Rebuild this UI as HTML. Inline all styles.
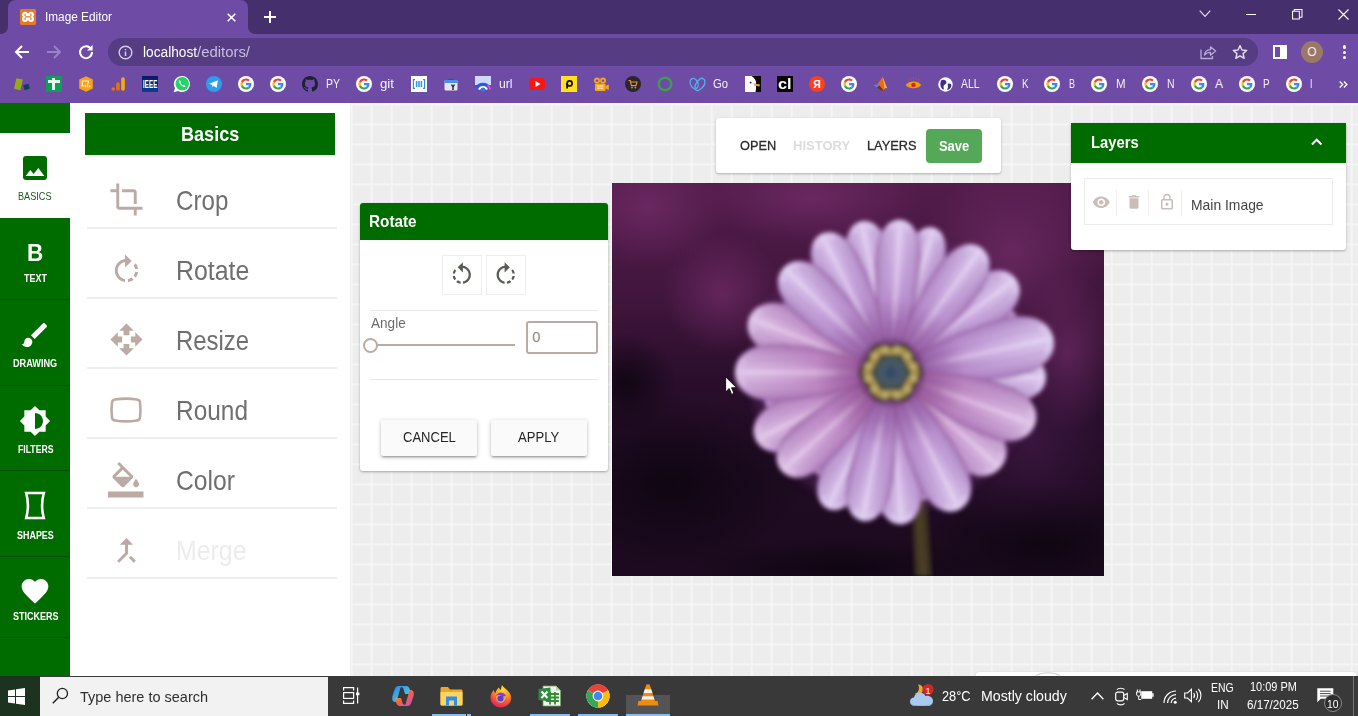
<!DOCTYPE html>
<html><head><meta charset="utf-8"><title>Image Editor</title><style>
*{box-sizing:border-box;margin:0;padding:0}
html,body{width:1358px;height:716px;overflow:hidden;background:#fff;font-family:"Liberation Sans",sans-serif;}
body{position:relative}
.abs{position:absolute}
.t{position:absolute;white-space:nowrap;line-height:1;transform-origin:0 50%}
svg{position:absolute;overflow:visible}
#canvas{left:350px;top:102px;width:1008px;height:574px;background-color:#ededed;
 background-image:linear-gradient(90deg,#f5f5f5 1.6px,transparent 1.6px),linear-gradient(180deg,#f5f5f5 1.6px,transparent 1.6px);
 background-size:20px 20px;background-position:0.6px 1.4px}
#side{left:0;top:102px;width:70px;height:574px;background:#006c00}
.sep{position:absolute;left:87px;width:250px;height:2px;background:#eeeeee}
#tabstrip{left:0;top:0;width:1358px;height:34px;background:#452f6c}
#toolbar{left:0;top:34px;width:1358px;height:68.6px;background:#6e4ca6}
#omni{left:108px;top:38px;width:1150px;height:28px;border-radius:14px;background:#553c83}
#taskbar{left:0;top:676px;width:1358px;height:40px;background:#393939}
</style></head>
<body>
<div id="canvas" class="abs"></div>
<div class="abs" style="left:975.6px;top:671.5px;width:380px;height:6px;background:#fff;border-radius:3px 3px 0 0;box-shadow:0 0 2px rgba(0,0,0,.12)"></div>
<svg style="left:1033px;top:672px" width="30" height="5" viewBox="0 0 30 5"><path d="M1 5 C7 -0.600 23 -0.600 29 5" stroke="#cfcfcf" stroke-width="1" fill="none"/></svg>
<div id="side" class="abs"></div>
<div class="abs" style="left:0;top:133px;width:70px;height:85px;background:#fff"></div>
<div class="abs" style="left:0;top:298.5px;width:70px;height:1.500px;background:#004e00"></div>
<div class="abs" style="left:0;top:384.5px;width:70px;height:1.500px;background:#004e00"></div>
<div class="abs" style="left:0;top:469.5px;width:70px;height:1.500px;background:#004e00"></div>
<div class="abs" style="left:0;top:555.5px;width:70px;height:1.500px;background:#004e00"></div>
<div class="abs" style="left:0;top:636.5px;width:70px;height:1.500px;background:#004e00"></div>
<svg style="left:19.2px;top:151.9px" width="32" height="32" viewBox="0 0 24 24" fill="#006c00" ><path d="M21 19V5c0-1.100-.9-2-2-2H5c-1.100 0-2 .9-2 2v14c0 1.100.9 2 2 2h14c1.100 0 2-.9 2-2zM8.500 13.500l2.500 3.010L14.500 12l4.500 6H5l3.500-4.500z"/></svg>
<span class="t" style="left:18.40px;top:192.00px;font-family:'Liberation Sans',sans-serif;font-size:10.4px;font-weight:normal;color:#1c5a1c;transform:scaleX(0.8813);">BASICS</span>
<span class="t" style="left:27.00px;top:242.00px;font-family:'Liberation Sans',sans-serif;font-size:23px;font-weight:bold;color:#fff;transform:scaleX(0.9805);">B</span>
<span class="t" style="left:23.70px;top:274.00px;font-family:'Liberation Sans',sans-serif;font-size:10.4px;font-weight:bold;color:#fff;transform:scaleX(0.8621);">TEXT</span>
<svg style="left:19px;top:319px" width="32" height="32" viewBox="0 0 24 24" fill="#fff" ><path d="M7 14c-1.660 0-3 1.340-3 3 0 1.310-1.160 2-2 2 .92 1.220 2.490 2 4 2 2.210 0 4-1.790 4-4 0-1.660-1.340-3-3-3zm13.710-9.370l-1.340-1.340c-.39-.39-1.020-.39-1.410 0L9 12.250 11.750 15l8.960-8.960c.39-.39.390-1.020 0-1.410z"/></svg>
<span class="t" style="left:13.10px;top:359.00px;font-family:'Liberation Sans',sans-serif;font-size:10.4px;font-weight:bold;color:#fff;transform:scaleX(0.8801);">DRAWING</span>
<svg style="left:19.2px;top:404.5px" width="32" height="32" viewBox="0 0 24 24" fill="#fff" ><path d="M20 15.310L23.310 12 20 8.690V4h-4.690L12 .69 8.690 4H4v4.690L.69 12 4 15.310V20h4.690L12 23.310 15.310 20H20v-4.690zM12 18V6c3.310 0 6 2.690 6 6s-2.690 6-6 6z"/></svg>
<span class="t" style="left:17.60px;top:445.00px;font-family:'Liberation Sans',sans-serif;font-size:10.4px;font-weight:bold;color:#fff;transform:scaleX(0.8347);">FILTERS</span>
<svg style="left:24px;top:491px" width="22" height="29" viewBox="0 0 22 29"><path d="M2.200 2 H19.800 C17.600 10 17.600 19 19.800 27 H2.200 C4.400 19 4.400 10 2.200 2 Z" stroke="#fff" stroke-width="2.6" fill="none" stroke-linejoin="miter"/></svg>
<span class="t" style="left:16.80px;top:531.00px;font-family:'Liberation Sans',sans-serif;font-size:10.4px;font-weight:bold;color:#fff;transform:scaleX(0.8611);">SHAPES</span>
<svg style="left:19.1px;top:575.2px" width="32" height="32" viewBox="0 0 24 24" fill="#fff" ><path d="M12 21.350l-1.450-1.320C5.400 15.360 2 12.280 2 8.500 2 5.420 4.420 3 7.500 3c1.740 0 3.410.81 4.500 2.090C13.090 3.810 14.760 3 16.500 3 19.580 3 22 5.420 22 8.500c0 3.780-3.400 6.860-8.550 11.540L12 21.350z"/></svg>
<span class="t" style="left:12.60px;top:612.00px;font-family:'Liberation Sans',sans-serif;font-size:10.4px;font-weight:bold;color:#fff;transform:scaleX(0.8659);">STICKERS</span>
<div class="abs" style="left:85px;top:113px;width:250px;height:41.500px;background:#006c00"></div>
<span class="t" style="left:181.10px;top:125.00px;font-family:'Liberation Sans',sans-serif;font-size:19.3px;font-weight:bold;color:#fff;transform:scaleX(0.9375);">Basics</span>
<div class="sep" style="top:227.2px"></div>
<div class="sep" style="top:297.2px"></div>
<div class="sep" style="top:367.2px"></div>
<div class="sep" style="top:437.2px"></div>
<div class="sep" style="top:507.2px"></div>
<div class="sep" style="top:577.2px"></div>
<svg style="left:108.5px;top:182px" width="35" height="35" viewBox="0 0 24 24" fill="#bcaaa4" ><path d="M17 15h2V7c0-1.1-.9-2-2-2H9v2h8v8zM7 17V1H5v4H1v2h4v10c0 1.1.9 2 2 2h10v4h2v-4h4v-2H7z"/></svg>
<span class="t" style="left:176.00px;top:187.00px;font-family:'Liberation Sans',sans-serif;font-size:27.3px;font-weight:normal;color:#6f6f6f;transform:scaleX(0.8839);">Crop</span>
<svg style="left:108.5px;top:253.3px" width="35" height="35" viewBox="0 0 24 24" fill="#bcaaa4" ><path d="M15.55 5.55L11 1v3.07C7.06 4.56 4 7.92 4 12s3.05 7.44 7 7.93v-2.02c-2.84-.48-5-2.94-5-5.91s2.16-5.43 5-5.910V10l4.550-4.450zM19.930 11c-.17-1.390-.72-2.730-1.620-3.890l-1.420 1.420c.54.750.88 1.600 1.020 2.470h2.020zM13 17.900v2.020c1.390-.17 2.740-.710 3.900-1.610l-1.440-1.440c-.75.540-1.590.890-2.460 1.030zm3.890-2.420l1.420 1.410c.9-1.160 1.450-2.500 1.620-3.890h-2.020c-.14.870-.48 1.720-1.020 2.480z"/></svg>
<span class="t" style="left:176.00px;top:257.00px;font-family:'Liberation Sans',sans-serif;font-size:27.3px;font-weight:normal;color:#6f6f6f;transform:scaleX(0.9113);">Rotate</span>
<svg style="left:108.5px;top:322px" width="35" height="35" viewBox="0 0 24 24" fill="#bcaaa4" ><path d="M10 9h4V6h3l-5-5-5 5h3v3zm-1 1H6V7l-5 5 5 5v-3h3v-4zm14 2l-5-5v3h-3v4h3v3l5-5zm-9 3h-4v3H7l5 5 5-5h-3v-3z"/></svg>
<span class="t" style="left:176.00px;top:327.00px;font-family:'Liberation Sans',sans-serif;font-size:27.3px;font-weight:normal;color:#6f6f6f;transform:scaleX(0.8749);">Resize</span>
<svg style="left:110px;top:397px" width="32" height="26" viewBox="0 0 32 26"><path d="M5 2.500 C11 1.500 21 1.500 27 2.500 C29 2.800 29.800 3.600 30 5.500 C30.600 10 30.600 16 30 20.500 C29.800 22.400 29 23.200 27 23.500 C21 24.500 11 24.500 5 23.500 C3 23.200 2.200 22.400 2 20.500 C1.400 16 1.400 10 2 5.500 C2.200 3.600 3 2.800 5 2.500 Z" stroke="#bcaaa4" stroke-width="2.600" fill="none"/></svg>
<span class="t" style="left:176.00px;top:397.00px;font-family:'Liberation Sans',sans-serif;font-size:27.3px;font-weight:normal;color:#6f6f6f;transform:scaleX(0.8949);">Round</span>
<svg style="left:107.7px;top:462px" width="35.5" height="35.5" viewBox="0 0 24 24" fill="#bcaaa4" ><path d="M16.56 8.94L7.62 0 6.21 1.41l2.38 2.380-5.150 5.150c-.59.590-.59 1.540 0 2.120l5.500 5.500c.29.290.68.440 1.060.440s.77-.15 1.060-.44l5.500-5.500c.59-.58.59-1.530 0-2.120zM5.210 10L10 5.210 14.790 10H5.210zM19 11.500s-2 2.170-2 3.500c0 1.100.9 2 2 2s2-.9 2-2c0-1.330-2-3.500-2-3.500z"/><path d="M0 20h24v4H0z"/></svg>
<span class="t" style="left:176.00px;top:467.00px;font-family:'Liberation Sans',sans-serif;font-size:27.3px;font-weight:normal;color:#6f6f6f;transform:scaleX(0.9044);">Color</span>
<svg style="left:108.5px;top:532.5px" width="35" height="35" viewBox="0 0 24 24" fill="#bcaaa4" ><path d="M17 20.410L18.410 19 15 15.590 13.590 17 17 20.410zM7.500 8H11v5.590L5.590 19 7 20.410l6-6V8h3.500L12 3.500 7.500 8z"/></svg>
<span class="t" style="left:176.00px;top:537.00px;font-family:'Liberation Sans',sans-serif;font-size:27.3px;font-weight:normal;color:#ececec;transform:scaleX(0.9111);">Merge</span>
<svg style="left:612px;top:183px" width="492" height="393" viewBox="0 0 492 393">
<defs>
<linearGradient id="bgv" x1="0" y1="0" x2="0" y2="1"><stop offset="0" stop-color="#531c4b"/><stop offset="0.3" stop-color="#40153c"/><stop offset="0.5" stop-color="#2a0e2c"/><stop offset="0.75" stop-color="#1f0b22"/><stop offset="1" stop-color="#1d0a20"/></linearGradient>
<radialGradient id="blob1" cx="0.5" cy="0.5" r="0.5"><stop offset="0" stop-color="#7a3070" stop-opacity="0.6"/><stop offset="1" stop-color="#7a3070" stop-opacity="0"/></radialGradient>
<radialGradient id="blob3" cx="0.5" cy="0.5" r="0.5"><stop offset="0" stop-color="#4a1c50" stop-opacity="0.55"/><stop offset="1" stop-color="#4a1c50" stop-opacity="0"/></radialGradient>
<radialGradient id="blob2" cx="0.5" cy="0.5" r="0.5"><stop offset="0" stop-color="#0c040f" stop-opacity="0.8"/><stop offset="1" stop-color="#0c040f" stop-opacity="0"/></radialGradient>
<linearGradient id="pg" x1="0" y1="1" x2="0" y2="0"><stop offset="0" stop-color="#8a4e98"/><stop offset="0.22" stop-color="#b384c8"/><stop offset="0.6" stop-color="#cfafe4"/><stop offset="1" stop-color="#dfcdf2"/></linearGradient>
<linearGradient id="pg2" x1="0" y1="1" x2="0" y2="0"><stop offset="0" stop-color="#6c3578"/><stop offset="0.4" stop-color="#a066ae"/><stop offset="1" stop-color="#bf93cf"/></linearGradient>
<linearGradient id="pgp" x1="0" y1="1" x2="0" y2="0"><stop offset="0" stop-color="#8f4a8e"/><stop offset="0.22" stop-color="#b97ab8"/><stop offset="0.6" stop-color="#d0a2d6"/><stop offset="1" stop-color="#dfc3e8"/></linearGradient>
<linearGradient id="xg" x1="0" y1="0" x2="1" y2="0"><stop offset="0" stop-color="#7a3f8c" stop-opacity="0.5"/><stop offset="0.28" stop-color="#7a3f8c" stop-opacity="0.05"/><stop offset="0.5" stop-color="#ffffff" stop-opacity="0.16"/><stop offset="0.72" stop-color="#7a3f8c" stop-opacity="0.05"/><stop offset="1" stop-color="#7a3f8c" stop-opacity="0.5"/></linearGradient>
<radialGradient id="core" cx="0.5" cy="0.5" r="0.5"><stop offset="0" stop-color="#6a2f70" stop-opacity="0.75"/><stop offset="0.45" stop-color="#7a3a80" stop-opacity="0.45"/><stop offset="1" stop-color="#7a3a80" stop-opacity="0"/></radialGradient>
<radialGradient id="ctr" cx="0.5" cy="0.5" r="0.5"><stop offset="0" stop-color="#2f4560"/><stop offset="0.6" stop-color="#46596c"/><stop offset="1" stop-color="#48544f"/></radialGradient>
<filter id="bl" x="-5%" y="-5%" width="110%" height="110%"><feGaussianBlur stdDeviation="1.9"/></filter>
<filter id="bl3" x="-20%" y="-20%" width="140%" height="140%"><feGaussianBlur stdDeviation="4"/></filter>
<clipPath id="imgclip"><rect x="0" y="0" width="492" height="393"/></clipPath>
</defs>
<g clip-path="url(#imgclip)">
<rect width="492" height="393" fill="url(#bgv)"/>
<ellipse cx="35" cy="25" rx="80" ry="60" fill="url(#blob1)"/>
<ellipse cx="200" cy="15" rx="110" ry="45" fill="url(#blob1)"/>
<ellipse cx="400" cy="70" rx="90" ry="90" fill="url(#blob1)"/>
<ellipse cx="110" cy="110" rx="60" ry="60" fill="url(#blob1)"/>
<ellipse cx="455" cy="170" rx="50" ry="80" fill="url(#blob1)"/>
<ellipse cx="420" cy="260" rx="90" ry="110" fill="url(#blob3)"/>
<ellipse cx="60" cy="300" rx="130" ry="90" fill="url(#blob2)"/>
<ellipse cx="430" cy="360" rx="120" ry="60" fill="url(#blob2)"/>
<ellipse cx="15" cy="200" rx="50" ry="50" fill="url(#blob2)"/>
<ellipse cx="230" cy="385" rx="150" ry="30" fill="url(#blob2)"/>
<path d="M299 300 C301 340 302 370 303 393 L320 393 C318 370 316 340 314 300 Z" fill="#3f3620" filter="url(#bl)"/>
<path d="M305 320 C306 350 308 375 310 393 L314 393 C312 375 310 350 309 320 Z" fill="#5a4c28" opacity="0.6" filter="url(#bl)"/>
<circle cx="279" cy="189.5" r="140" fill="#5a2862" opacity="0.5" filter="url(#bl3)"/>
<g filter="url(#bl)">
<path d="M -2.5 -6 C -11.200000000000001 -32.0, -20.0 -64.0, -20.0 -94.72 C -20.0 -119.04, -10.0 -128, 0 -128 C 10.0 -128, 20.0 -119.04, 20.0 -94.72 C 20.0 -64.0, 11.200000000000001 -32.0, 2.5 -6 Z" fill="url(#pg2)" stroke="#6a3a7a" stroke-width="1" transform="translate(279 189.5) rotate(-19)"/>
<path d="M -2.5 -6 C -10.64 -32.0, -19.0 -64.0, -19.0 -94.72 C -19.0 -119.04, -9.5 -128, 0 -128 C 9.5 -128, 19.0 -119.04, 19.0 -94.72 C 19.0 -64.0, 10.64 -32.0, 2.5 -6 Z" fill="url(#pg2)" stroke="#6a3a7a" stroke-width="1" transform="translate(279 189.5) rotate(26)"/>
<path d="M -2.5 -6 C -11.200000000000001 -33.0, -20.0 -66.0, -20.0 -97.67999999999999 C -20.0 -122.76, -10.0 -132, 0 -132 C 10.0 -132, 20.0 -122.76, 20.0 -97.67999999999999 C 20.0 -66.0, 11.200000000000001 -33.0, 2.5 -6 Z" fill="url(#pg2)" stroke="#6a3a7a" stroke-width="1" transform="translate(279 189.5) rotate(45)"/>
<path d="M -2.5 -6 C -11.760000000000002 -34.5, -21.0 -69.0, -21.0 -102.12 C -21.0 -128.34, -10.5 -138, 0 -138 C 10.5 -138, 21.0 -128.34, 21.0 -102.12 C 21.0 -69.0, 11.760000000000002 -34.5, 2.5 -6 Z" fill="url(#pg2)" stroke="#6a3a7a" stroke-width="1" transform="translate(279 189.5) rotate(66)"/>
<path d="M -2.5 -6 C -11.760000000000002 -32.5, -21.0 -65.0, -21.0 -96.2 C -21.0 -120.9, -10.5 -130, 0 -130 C 10.5 -130, 21.0 -120.9, 21.0 -96.2 C 21.0 -65.0, 11.760000000000002 -32.5, 2.5 -6 Z" fill="url(#pg2)" stroke="#6a3a7a" stroke-width="1" transform="translate(279 189.5) rotate(100)"/>
<path d="M -2.5 -6 C -11.760000000000002 -31.5, -21.0 -63.0, -21.0 -93.24 C -21.0 -117.18, -10.5 -126, 0 -126 C 10.5 -126, 21.0 -117.18, 21.0 -93.24 C 21.0 -63.0, 11.760000000000002 -31.5, 2.5 -6 Z" fill="url(#pg2)" stroke="#6a3a7a" stroke-width="1" transform="translate(279 189.5) rotate(121)"/>
<path d="M -2.5 -6 C -11.200000000000001 -32.0, -20.0 -64.0, -20.0 -94.72 C -20.0 -119.04, -10.0 -128, 0 -128 C 10.0 -128, 20.0 -119.04, 20.0 -94.72 C 20.0 -64.0, 11.200000000000001 -32.0, 2.5 -6 Z" fill="url(#pg2)" stroke="#6a3a7a" stroke-width="1" transform="translate(279 189.5) rotate(142)"/>
<path d="M -2.5 -6 C -10.64 -33.0, -19.0 -66.0, -19.0 -97.67999999999999 C -19.0 -122.76, -9.5 -132, 0 -132 C 9.5 -132, 19.0 -122.76, 19.0 -97.67999999999999 C 19.0 -66.0, 10.64 -33.0, 2.5 -6 Z" fill="url(#pg2)" stroke="#6a3a7a" stroke-width="1" transform="translate(279 189.5) rotate(165)"/>
<path d="M -2.5 -6 C -11.200000000000001 -31.5, -20.0 -63.0, -20.0 -93.24 C -20.0 -117.18, -10.0 -126, 0 -126 C 10.0 -126, 20.0 -117.18, 20.0 -93.24 C 20.0 -63.0, 11.200000000000001 -31.5, 2.5 -6 Z" fill="url(#pg2)" stroke="#6a3a7a" stroke-width="1" transform="translate(279 189.5) rotate(217)"/>
<path d="M -2.5 -6 C -11.760000000000002 -32.5, -21.0 -65.0, -21.0 -96.2 C -21.0 -120.9, -10.5 -130, 0 -130 C 10.5 -130, 21.0 -120.9, 21.0 -96.2 C 21.0 -65.0, 11.760000000000002 -32.5, 2.5 -6 Z" fill="url(#pg2)" stroke="#6a3a7a" stroke-width="1" transform="translate(279 189.5) rotate(257)"/>
<path d="M -2.5 -6 C -11.760000000000002 -32.5, -21.0 -65.0, -21.0 -96.2 C -21.0 -120.9, -10.5 -130, 0 -130 C 10.5 -130, 21.0 -120.9, 21.0 -96.2 C 21.0 -65.0, 11.760000000000002 -32.5, 2.5 -6 Z" fill="url(#pg2)" stroke="#6a3a7a" stroke-width="1" transform="translate(279 189.5) rotate(281)"/>
<path d="M -2.5 -6 C -11.760000000000002 -32.0, -21.0 -64.0, -21.0 -94.72 C -21.0 -119.04, -10.5 -128, 0 -128 C 10.5 -128, 21.0 -119.04, 21.0 -94.72 C 21.0 -64.0, 11.760000000000002 -32.0, 2.5 -6 Z" fill="url(#pg2)" stroke="#6a3a7a" stroke-width="1" transform="translate(279 189.5) rotate(303)"/>
<path d="M -2.5 -6 C -12.32 -38.5, -22.0 -77.0, -22.0 -113.96 C -22.0 -143.22, -11.0 -154, 0 -154 C 11.0 -154, 22.0 -143.22, 22.0 -113.96 C 22.0 -77.0, 12.32 -38.5, 2.5 -6 Z" fill="url(#pg)" stroke="#9a62a4" stroke-width="1.2" transform="translate(279 189.5) rotate(-11)"/>
<path d="M -2.5 -6 C -12.32 -38.5, -22.0 -77.0, -22.0 -113.96 C -22.0 -143.22, -11.0 -154, 0 -154 C 11.0 -154, 22.0 -143.22, 22.0 -113.96 C 22.0 -77.0, 12.32 -38.5, 2.5 -6 Z" fill="url(#xg)" transform="translate(279 189.5) rotate(-11)"/>
<path d="M -2.1119999999999997 -30.8 Q -11.616 -92.39999999999999 -8.447999999999999 -143.22" stroke="#9460a8" stroke-opacity="0.4" stroke-width="2" fill="none" transform="translate(279 189.5) rotate(-11)"/>
<path d="M 2.1119999999999997 -30.8 Q 11.616 -92.39999999999999 8.447999999999999 -143.22" stroke="#9460a8" stroke-opacity="0.4" stroke-width="2" fill="none" transform="translate(279 189.5) rotate(-11)"/>
<path d="M -3.96 -33.88 Q -16.632 -92.39999999999999 -11.879999999999999 -146.29999999999998" stroke="#7d4a96" stroke-opacity="0.28" stroke-width="1" fill="none" transform="translate(279 189.5) rotate(-11)"/>
<path d="M -1.3199999999999998 -33.88 Q -5.544 -92.39999999999999 -3.9599999999999995 -146.29999999999998" stroke="#7d4a96" stroke-opacity="0.28" stroke-width="1" fill="none" transform="translate(279 189.5) rotate(-11)"/>
<path d="M 1.3199999999999998 -33.88 Q 5.544 -92.39999999999999 3.9599999999999995 -146.29999999999998" stroke="#7d4a96" stroke-opacity="0.28" stroke-width="1" fill="none" transform="translate(279 189.5) rotate(-11)"/>
<path d="M 3.96 -33.88 Q 16.632 -92.39999999999999 11.879999999999999 -146.29999999999998" stroke="#7d4a96" stroke-opacity="0.28" stroke-width="1" fill="none" transform="translate(279 189.5) rotate(-11)"/>
<path d="M 0 -53.9 L 0 -141.68" stroke="#f0e0f8" stroke-opacity="0.35" stroke-width="3" fill="none" transform="translate(279 189.5) rotate(-11)"/>
<path d="M -2.5 -6 C -11.200000000000001 -37.75, -20.0 -75.5, -20.0 -111.74 C -20.0 -140.43, -10.0 -151, 0 -151 C 10.0 -151, 20.0 -140.43, 20.0 -111.74 C 20.0 -75.5, 11.200000000000001 -37.75, 2.5 -6 Z" fill="url(#pg)" stroke="#9a62a4" stroke-width="1.2" transform="translate(279 189.5) rotate(16.5)"/>
<path d="M -2.5 -6 C -11.200000000000001 -37.75, -20.0 -75.5, -20.0 -111.74 C -20.0 -140.43, -10.0 -151, 0 -151 C 10.0 -151, 20.0 -140.43, 20.0 -111.74 C 20.0 -75.5, 11.200000000000001 -37.75, 2.5 -6 Z" fill="url(#xg)" transform="translate(279 189.5) rotate(16.5)"/>
<path d="M -1.92 -30.200000000000003 Q -10.56 -90.6 -7.68 -140.43" stroke="#9460a8" stroke-opacity="0.4" stroke-width="2" fill="none" transform="translate(279 189.5) rotate(16.5)"/>
<path d="M 1.92 -30.200000000000003 Q 10.56 -90.6 7.68 -140.43" stroke="#9460a8" stroke-opacity="0.4" stroke-width="2" fill="none" transform="translate(279 189.5) rotate(16.5)"/>
<path d="M -3.5999999999999996 -33.22 Q -15.12 -90.6 -10.799999999999999 -143.45" stroke="#7d4a96" stroke-opacity="0.28" stroke-width="1" fill="none" transform="translate(279 189.5) rotate(16.5)"/>
<path d="M -1.2 -33.22 Q -5.04 -90.6 -3.5999999999999996 -143.45" stroke="#7d4a96" stroke-opacity="0.28" stroke-width="1" fill="none" transform="translate(279 189.5) rotate(16.5)"/>
<path d="M 1.2 -33.22 Q 5.04 -90.6 3.5999999999999996 -143.45" stroke="#7d4a96" stroke-opacity="0.28" stroke-width="1" fill="none" transform="translate(279 189.5) rotate(16.5)"/>
<path d="M 3.5999999999999996 -33.22 Q 15.12 -90.6 10.799999999999999 -143.45" stroke="#7d4a96" stroke-opacity="0.28" stroke-width="1" fill="none" transform="translate(279 189.5) rotate(16.5)"/>
<path d="M 0 -52.849999999999994 L 0 -138.92000000000002" stroke="#f0e0f8" stroke-opacity="0.35" stroke-width="3" fill="none" transform="translate(279 189.5) rotate(16.5)"/>
<path d="M -2.5 -6 C -14.000000000000002 -39.0, -25.0 -78.0, -25.0 -115.44 C -25.0 -145.08, -12.5 -156, 0 -156 C 12.5 -156, 25.0 -145.08, 25.0 -115.44 C 25.0 -78.0, 14.000000000000002 -39.0, 2.5 -6 Z" fill="url(#pg)" stroke="#9a62a4" stroke-width="1.2" transform="translate(279 189.5) rotate(53)"/>
<path d="M -2.5 -6 C -14.000000000000002 -39.0, -25.0 -78.0, -25.0 -115.44 C -25.0 -145.08, -12.5 -156, 0 -156 C 12.5 -156, 25.0 -145.08, 25.0 -115.44 C 25.0 -78.0, 14.000000000000002 -39.0, 2.5 -6 Z" fill="url(#xg)" transform="translate(279 189.5) rotate(53)"/>
<path d="M -2.4000000000000004 -31.200000000000003 Q -13.200000000000001 -93.6 -9.600000000000001 -145.08" stroke="#9460a8" stroke-opacity="0.4" stroke-width="2" fill="none" transform="translate(279 189.5) rotate(53)"/>
<path d="M 2.4000000000000004 -31.200000000000003 Q 13.200000000000001 -93.6 9.600000000000001 -145.08" stroke="#9460a8" stroke-opacity="0.4" stroke-width="2" fill="none" transform="translate(279 189.5) rotate(53)"/>
<path d="M -4.5 -34.32 Q -18.900000000000002 -93.6 -13.5 -148.2" stroke="#7d4a96" stroke-opacity="0.28" stroke-width="1" fill="none" transform="translate(279 189.5) rotate(53)"/>
<path d="M -1.5 -34.32 Q -6.300000000000001 -93.6 -4.5 -148.2" stroke="#7d4a96" stroke-opacity="0.28" stroke-width="1" fill="none" transform="translate(279 189.5) rotate(53)"/>
<path d="M 1.5 -34.32 Q 6.300000000000001 -93.6 4.5 -148.2" stroke="#7d4a96" stroke-opacity="0.28" stroke-width="1" fill="none" transform="translate(279 189.5) rotate(53)"/>
<path d="M 4.5 -34.32 Q 18.900000000000002 -93.6 13.5 -148.2" stroke="#7d4a96" stroke-opacity="0.28" stroke-width="1" fill="none" transform="translate(279 189.5) rotate(53)"/>
<path d="M 0 -54.599999999999994 L 0 -143.52" stroke="#f0e0f8" stroke-opacity="0.35" stroke-width="3" fill="none" transform="translate(279 189.5) rotate(53)"/>
<path d="M -2.5 -6 C -14.000000000000002 -38.75, -25.0 -77.5, -25.0 -114.7 C -25.0 -144.15, -12.5 -155, 0 -155 C 12.5 -155, 25.0 -144.15, 25.0 -114.7 C 25.0 -77.5, 14.000000000000002 -38.75, 2.5 -6 Z" fill="url(#pg)" stroke="#9a62a4" stroke-width="1.2" transform="translate(279 189.5) rotate(92)"/>
<path d="M -2.5 -6 C -14.000000000000002 -38.75, -25.0 -77.5, -25.0 -114.7 C -25.0 -144.15, -12.5 -155, 0 -155 C 12.5 -155, 25.0 -144.15, 25.0 -114.7 C 25.0 -77.5, 14.000000000000002 -38.75, 2.5 -6 Z" fill="url(#xg)" transform="translate(279 189.5) rotate(92)"/>
<path d="M -2.4000000000000004 -31.0 Q -13.200000000000001 -93.0 -9.600000000000001 -144.15" stroke="#9460a8" stroke-opacity="0.4" stroke-width="2" fill="none" transform="translate(279 189.5) rotate(92)"/>
<path d="M 2.4000000000000004 -31.0 Q 13.200000000000001 -93.0 9.600000000000001 -144.15" stroke="#9460a8" stroke-opacity="0.4" stroke-width="2" fill="none" transform="translate(279 189.5) rotate(92)"/>
<path d="M -4.5 -34.1 Q -18.900000000000002 -93.0 -13.5 -147.25" stroke="#7d4a96" stroke-opacity="0.28" stroke-width="1" fill="none" transform="translate(279 189.5) rotate(92)"/>
<path d="M -1.5 -34.1 Q -6.300000000000001 -93.0 -4.5 -147.25" stroke="#7d4a96" stroke-opacity="0.28" stroke-width="1" fill="none" transform="translate(279 189.5) rotate(92)"/>
<path d="M 1.5 -34.1 Q 6.300000000000001 -93.0 4.5 -147.25" stroke="#7d4a96" stroke-opacity="0.28" stroke-width="1" fill="none" transform="translate(279 189.5) rotate(92)"/>
<path d="M 4.5 -34.1 Q 18.900000000000002 -93.0 13.5 -147.25" stroke="#7d4a96" stroke-opacity="0.28" stroke-width="1" fill="none" transform="translate(279 189.5) rotate(92)"/>
<path d="M 0 -54.25 L 0 -142.6" stroke="#f0e0f8" stroke-opacity="0.35" stroke-width="3" fill="none" transform="translate(279 189.5) rotate(92)"/>
<path d="M -2.5 -6 C -15.120000000000001 -36.25, -27.0 -72.5, -27.0 -107.3 C -27.0 -134.85, -13.5 -145, 0 -145 C 13.5 -145, 27.0 -134.85, 27.0 -107.3 C 27.0 -72.5, 15.120000000000001 -36.25, 2.5 -6 Z" fill="url(#pgp)" stroke="#9a62a4" stroke-width="1.2" transform="translate(279 189.5) rotate(131)"/>
<path d="M -2.5 -6 C -15.120000000000001 -36.25, -27.0 -72.5, -27.0 -107.3 C -27.0 -134.85, -13.5 -145, 0 -145 C 13.5 -145, 27.0 -134.85, 27.0 -107.3 C 27.0 -72.5, 15.120000000000001 -36.25, 2.5 -6 Z" fill="url(#xg)" transform="translate(279 189.5) rotate(131)"/>
<path d="M -2.592 -29.0 Q -14.256 -87.0 -10.368 -134.85" stroke="#9460a8" stroke-opacity="0.4" stroke-width="2" fill="none" transform="translate(279 189.5) rotate(131)"/>
<path d="M 2.592 -29.0 Q 14.256 -87.0 10.368 -134.85" stroke="#9460a8" stroke-opacity="0.4" stroke-width="2" fill="none" transform="translate(279 189.5) rotate(131)"/>
<path d="M -4.859999999999999 -31.9 Q -20.412 -87.0 -14.579999999999998 -137.75" stroke="#7d4a96" stroke-opacity="0.28" stroke-width="1" fill="none" transform="translate(279 189.5) rotate(131)"/>
<path d="M -1.6199999999999999 -31.9 Q -6.803999999999999 -87.0 -4.859999999999999 -137.75" stroke="#7d4a96" stroke-opacity="0.28" stroke-width="1" fill="none" transform="translate(279 189.5) rotate(131)"/>
<path d="M 1.6199999999999999 -31.9 Q 6.803999999999999 -87.0 4.859999999999999 -137.75" stroke="#7d4a96" stroke-opacity="0.28" stroke-width="1" fill="none" transform="translate(279 189.5) rotate(131)"/>
<path d="M 4.859999999999999 -31.9 Q 20.412 -87.0 14.579999999999998 -137.75" stroke="#7d4a96" stroke-opacity="0.28" stroke-width="1" fill="none" transform="translate(279 189.5) rotate(131)"/>
<path d="M 0 -50.75 L 0 -133.4" stroke="#f0e0f8" stroke-opacity="0.35" stroke-width="3" fill="none" transform="translate(279 189.5) rotate(131)"/>
<path d="M -2.5 -6 C -12.88 -38.0, -23.0 -76.0, -23.0 -112.48 C -23.0 -141.36, -11.5 -152, 0 -152 C 11.5 -152, 23.0 -141.36, 23.0 -112.48 C 23.0 -76.0, 12.88 -38.0, 2.5 -6 Z" fill="url(#pg)" stroke="#9a62a4" stroke-width="1.2" transform="translate(279 189.5) rotate(176)"/>
<path d="M -2.5 -6 C -12.88 -38.0, -23.0 -76.0, -23.0 -112.48 C -23.0 -141.36, -11.5 -152, 0 -152 C 11.5 -152, 23.0 -141.36, 23.0 -112.48 C 23.0 -76.0, 12.88 -38.0, 2.5 -6 Z" fill="url(#xg)" transform="translate(279 189.5) rotate(176)"/>
<path d="M -2.2079999999999997 -30.400000000000002 Q -12.144 -91.2 -8.831999999999999 -141.36" stroke="#9460a8" stroke-opacity="0.4" stroke-width="2" fill="none" transform="translate(279 189.5) rotate(176)"/>
<path d="M 2.2079999999999997 -30.400000000000002 Q 12.144 -91.2 8.831999999999999 -141.36" stroke="#9460a8" stroke-opacity="0.4" stroke-width="2" fill="none" transform="translate(279 189.5) rotate(176)"/>
<path d="M -4.14 -33.44 Q -17.387999999999998 -91.2 -12.419999999999998 -144.4" stroke="#7d4a96" stroke-opacity="0.28" stroke-width="1" fill="none" transform="translate(279 189.5) rotate(176)"/>
<path d="M -1.38 -33.44 Q -5.795999999999999 -91.2 -4.14 -144.4" stroke="#7d4a96" stroke-opacity="0.28" stroke-width="1" fill="none" transform="translate(279 189.5) rotate(176)"/>
<path d="M 1.38 -33.44 Q 5.795999999999999 -91.2 4.14 -144.4" stroke="#7d4a96" stroke-opacity="0.28" stroke-width="1" fill="none" transform="translate(279 189.5) rotate(176)"/>
<path d="M 4.14 -33.44 Q 17.387999999999998 -91.2 12.419999999999998 -144.4" stroke="#7d4a96" stroke-opacity="0.28" stroke-width="1" fill="none" transform="translate(279 189.5) rotate(176)"/>
<path d="M 0 -53.199999999999996 L 0 -139.84" stroke="#f0e0f8" stroke-opacity="0.35" stroke-width="3" fill="none" transform="translate(279 189.5) rotate(176)"/>
<path d="M -2.5 -6 C -12.32 -37.5, -22.0 -75.0, -22.0 -111.0 C -22.0 -139.5, -11.0 -150, 0 -150 C 11.0 -150, 22.0 -139.5, 22.0 -111.0 C 22.0 -75.0, 12.32 -37.5, 2.5 -6 Z" fill="url(#pg)" stroke="#9a62a4" stroke-width="1.2" transform="translate(279 189.5) rotate(205)"/>
<path d="M -2.5 -6 C -12.32 -37.5, -22.0 -75.0, -22.0 -111.0 C -22.0 -139.5, -11.0 -150, 0 -150 C 11.0 -150, 22.0 -139.5, 22.0 -111.0 C 22.0 -75.0, 12.32 -37.5, 2.5 -6 Z" fill="url(#xg)" transform="translate(279 189.5) rotate(205)"/>
<path d="M -2.1119999999999997 -30.0 Q -11.616 -90.0 -8.447999999999999 -139.5" stroke="#9460a8" stroke-opacity="0.4" stroke-width="2" fill="none" transform="translate(279 189.5) rotate(205)"/>
<path d="M 2.1119999999999997 -30.0 Q 11.616 -90.0 8.447999999999999 -139.5" stroke="#9460a8" stroke-opacity="0.4" stroke-width="2" fill="none" transform="translate(279 189.5) rotate(205)"/>
<path d="M -3.96 -33.0 Q -16.632 -90.0 -11.879999999999999 -142.5" stroke="#7d4a96" stroke-opacity="0.28" stroke-width="1" fill="none" transform="translate(279 189.5) rotate(205)"/>
<path d="M -1.3199999999999998 -33.0 Q -5.544 -90.0 -3.9599999999999995 -142.5" stroke="#7d4a96" stroke-opacity="0.28" stroke-width="1" fill="none" transform="translate(279 189.5) rotate(205)"/>
<path d="M 1.3199999999999998 -33.0 Q 5.544 -90.0 3.9599999999999995 -142.5" stroke="#7d4a96" stroke-opacity="0.28" stroke-width="1" fill="none" transform="translate(279 189.5) rotate(205)"/>
<path d="M 3.96 -33.0 Q 16.632 -90.0 11.879999999999999 -142.5" stroke="#7d4a96" stroke-opacity="0.28" stroke-width="1" fill="none" transform="translate(279 189.5) rotate(205)"/>
<path d="M 0 -52.5 L 0 -138.0" stroke="#f0e0f8" stroke-opacity="0.35" stroke-width="3" fill="none" transform="translate(279 189.5) rotate(205)"/>
<path d="M -2.5 -6 C -14.000000000000002 -37.75, -25.0 -75.5, -25.0 -111.74 C -25.0 -140.43, -12.5 -151, 0 -151 C 12.5 -151, 25.0 -140.43, 25.0 -111.74 C 25.0 -75.5, 14.000000000000002 -37.75, 2.5 -6 Z" fill="url(#pgp)" stroke="#9a62a4" stroke-width="1.2" transform="translate(279 189.5) rotate(243.5)"/>
<path d="M -2.5 -6 C -14.000000000000002 -37.75, -25.0 -75.5, -25.0 -111.74 C -25.0 -140.43, -12.5 -151, 0 -151 C 12.5 -151, 25.0 -140.43, 25.0 -111.74 C 25.0 -75.5, 14.000000000000002 -37.75, 2.5 -6 Z" fill="url(#xg)" transform="translate(279 189.5) rotate(243.5)"/>
<path d="M -2.4000000000000004 -30.200000000000003 Q -13.200000000000001 -90.6 -9.600000000000001 -140.43" stroke="#9460a8" stroke-opacity="0.4" stroke-width="2" fill="none" transform="translate(279 189.5) rotate(243.5)"/>
<path d="M 2.4000000000000004 -30.200000000000003 Q 13.200000000000001 -90.6 9.600000000000001 -140.43" stroke="#9460a8" stroke-opacity="0.4" stroke-width="2" fill="none" transform="translate(279 189.5) rotate(243.5)"/>
<path d="M -4.5 -33.22 Q -18.900000000000002 -90.6 -13.5 -143.45" stroke="#7d4a96" stroke-opacity="0.28" stroke-width="1" fill="none" transform="translate(279 189.5) rotate(243.5)"/>
<path d="M -1.5 -33.22 Q -6.300000000000001 -90.6 -4.5 -143.45" stroke="#7d4a96" stroke-opacity="0.28" stroke-width="1" fill="none" transform="translate(279 189.5) rotate(243.5)"/>
<path d="M 1.5 -33.22 Q 6.300000000000001 -90.6 4.5 -143.45" stroke="#7d4a96" stroke-opacity="0.28" stroke-width="1" fill="none" transform="translate(279 189.5) rotate(243.5)"/>
<path d="M 4.5 -33.22 Q 18.900000000000002 -90.6 13.5 -143.45" stroke="#7d4a96" stroke-opacity="0.28" stroke-width="1" fill="none" transform="translate(279 189.5) rotate(243.5)"/>
<path d="M 0 -52.849999999999994 L 0 -138.92000000000002" stroke="#f0e0f8" stroke-opacity="0.35" stroke-width="3" fill="none" transform="translate(279 189.5) rotate(243.5)"/>
<path d="M -2.5 -6 C -14.560000000000002 -38.0, -26.0 -76.0, -26.0 -112.48 C -26.0 -141.36, -13.0 -152, 0 -152 C 13.0 -152, 26.0 -141.36, 26.0 -112.48 C 26.0 -76.0, 14.560000000000002 -38.0, 2.5 -6 Z" fill="url(#pgp)" stroke="#9a62a4" stroke-width="1.2" transform="translate(279 189.5) rotate(291)"/>
<path d="M -2.5 -6 C -14.560000000000002 -38.0, -26.0 -76.0, -26.0 -112.48 C -26.0 -141.36, -13.0 -152, 0 -152 C 13.0 -152, 26.0 -141.36, 26.0 -112.48 C 26.0 -76.0, 14.560000000000002 -38.0, 2.5 -6 Z" fill="url(#xg)" transform="translate(279 189.5) rotate(291)"/>
<path d="M -2.4960000000000004 -30.400000000000002 Q -13.728000000000002 -91.2 -9.984000000000002 -141.36" stroke="#9460a8" stroke-opacity="0.4" stroke-width="2" fill="none" transform="translate(279 189.5) rotate(291)"/>
<path d="M 2.4960000000000004 -30.400000000000002 Q 13.728000000000002 -91.2 9.984000000000002 -141.36" stroke="#9460a8" stroke-opacity="0.4" stroke-width="2" fill="none" transform="translate(279 189.5) rotate(291)"/>
<path d="M -4.68 -33.44 Q -19.656 -91.2 -14.04 -144.4" stroke="#7d4a96" stroke-opacity="0.28" stroke-width="1" fill="none" transform="translate(279 189.5) rotate(291)"/>
<path d="M -1.56 -33.44 Q -6.5520000000000005 -91.2 -4.68 -144.4" stroke="#7d4a96" stroke-opacity="0.28" stroke-width="1" fill="none" transform="translate(279 189.5) rotate(291)"/>
<path d="M 1.56 -33.44 Q 6.5520000000000005 -91.2 4.68 -144.4" stroke="#7d4a96" stroke-opacity="0.28" stroke-width="1" fill="none" transform="translate(279 189.5) rotate(291)"/>
<path d="M 4.68 -33.44 Q 19.656 -91.2 14.04 -144.4" stroke="#7d4a96" stroke-opacity="0.28" stroke-width="1" fill="none" transform="translate(279 189.5) rotate(291)"/>
<path d="M 0 -53.199999999999996 L 0 -139.84" stroke="#f0e0f8" stroke-opacity="0.35" stroke-width="3" fill="none" transform="translate(279 189.5) rotate(291)"/>
<path d="M -2.5 -6 C -12.88 -38.75, -23.0 -77.5, -23.0 -114.7 C -23.0 -144.15, -11.5 -155, 0 -155 C 11.5 -155, 23.0 -144.15, 23.0 -114.7 C 23.0 -77.5, 12.88 -38.75, 2.5 -6 Z" fill="url(#pg)" stroke="#9a62a4" stroke-width="1.2" transform="translate(279 189.5) rotate(-26.7)"/>
<path d="M -2.5 -6 C -12.88 -38.75, -23.0 -77.5, -23.0 -114.7 C -23.0 -144.15, -11.5 -155, 0 -155 C 11.5 -155, 23.0 -144.15, 23.0 -114.7 C 23.0 -77.5, 12.88 -38.75, 2.5 -6 Z" fill="url(#xg)" transform="translate(279 189.5) rotate(-26.7)"/>
<path d="M -2.2079999999999997 -31.0 Q -12.144 -93.0 -8.831999999999999 -144.15" stroke="#9460a8" stroke-opacity="0.4" stroke-width="2" fill="none" transform="translate(279 189.5) rotate(-26.7)"/>
<path d="M 2.2079999999999997 -31.0 Q 12.144 -93.0 8.831999999999999 -144.15" stroke="#9460a8" stroke-opacity="0.4" stroke-width="2" fill="none" transform="translate(279 189.5) rotate(-26.7)"/>
<path d="M -4.14 -34.1 Q -17.387999999999998 -93.0 -12.419999999999998 -147.25" stroke="#7d4a96" stroke-opacity="0.28" stroke-width="1" fill="none" transform="translate(279 189.5) rotate(-26.7)"/>
<path d="M -1.38 -34.1 Q -5.795999999999999 -93.0 -4.14 -147.25" stroke="#7d4a96" stroke-opacity="0.28" stroke-width="1" fill="none" transform="translate(279 189.5) rotate(-26.7)"/>
<path d="M 1.38 -34.1 Q 5.795999999999999 -93.0 4.14 -147.25" stroke="#7d4a96" stroke-opacity="0.28" stroke-width="1" fill="none" transform="translate(279 189.5) rotate(-26.7)"/>
<path d="M 4.14 -34.1 Q 17.387999999999998 -93.0 12.419999999999998 -147.25" stroke="#7d4a96" stroke-opacity="0.28" stroke-width="1" fill="none" transform="translate(279 189.5) rotate(-26.7)"/>
<path d="M 0 -54.25 L 0 -142.6" stroke="#f0e0f8" stroke-opacity="0.35" stroke-width="3" fill="none" transform="translate(279 189.5) rotate(-26.7)"/>
<path d="M -2.5 -6 C -12.32 -38.25, -22.0 -76.5, -22.0 -113.22 C -22.0 -142.29000000000002, -11.0 -153, 0 -153 C 11.0 -153, 22.0 -142.29000000000002, 22.0 -113.22 C 22.0 -76.5, 12.32 -38.25, 2.5 -6 Z" fill="url(#pg)" stroke="#9a62a4" stroke-width="1.2" transform="translate(279 189.5) rotate(3.5)"/>
<path d="M -2.5 -6 C -12.32 -38.25, -22.0 -76.5, -22.0 -113.22 C -22.0 -142.29000000000002, -11.0 -153, 0 -153 C 11.0 -153, 22.0 -142.29000000000002, 22.0 -113.22 C 22.0 -76.5, 12.32 -38.25, 2.5 -6 Z" fill="url(#xg)" transform="translate(279 189.5) rotate(3.5)"/>
<path d="M -2.1119999999999997 -30.6 Q -11.616 -91.8 -8.447999999999999 -142.29000000000002" stroke="#9460a8" stroke-opacity="0.4" stroke-width="2" fill="none" transform="translate(279 189.5) rotate(3.5)"/>
<path d="M 2.1119999999999997 -30.6 Q 11.616 -91.8 8.447999999999999 -142.29000000000002" stroke="#9460a8" stroke-opacity="0.4" stroke-width="2" fill="none" transform="translate(279 189.5) rotate(3.5)"/>
<path d="M -3.96 -33.660000000000004 Q -16.632 -91.8 -11.879999999999999 -145.35" stroke="#7d4a96" stroke-opacity="0.28" stroke-width="1" fill="none" transform="translate(279 189.5) rotate(3.5)"/>
<path d="M -1.3199999999999998 -33.660000000000004 Q -5.544 -91.8 -3.9599999999999995 -145.35" stroke="#7d4a96" stroke-opacity="0.28" stroke-width="1" fill="none" transform="translate(279 189.5) rotate(3.5)"/>
<path d="M 1.3199999999999998 -33.660000000000004 Q 5.544 -91.8 3.9599999999999995 -145.35" stroke="#7d4a96" stroke-opacity="0.28" stroke-width="1" fill="none" transform="translate(279 189.5) rotate(3.5)"/>
<path d="M 3.96 -33.660000000000004 Q 16.632 -91.8 11.879999999999999 -145.35" stroke="#7d4a96" stroke-opacity="0.28" stroke-width="1" fill="none" transform="translate(279 189.5) rotate(3.5)"/>
<path d="M 0 -53.55 L 0 -140.76000000000002" stroke="#f0e0f8" stroke-opacity="0.35" stroke-width="3" fill="none" transform="translate(279 189.5) rotate(3.5)"/>
<path d="M -2.5 -6 C -13.440000000000001 -38.5, -24.0 -77.0, -24.0 -113.96 C -24.0 -143.22, -12.0 -154, 0 -154 C 12.0 -154, 24.0 -143.22, 24.0 -113.96 C 24.0 -77.0, 13.440000000000001 -38.5, 2.5 -6 Z" fill="url(#pg)" stroke="#9a62a4" stroke-width="1.2" transform="translate(279 189.5) rotate(36)"/>
<path d="M -2.5 -6 C -13.440000000000001 -38.5, -24.0 -77.0, -24.0 -113.96 C -24.0 -143.22, -12.0 -154, 0 -154 C 12.0 -154, 24.0 -143.22, 24.0 -113.96 C 24.0 -77.0, 13.440000000000001 -38.5, 2.5 -6 Z" fill="url(#xg)" transform="translate(279 189.5) rotate(36)"/>
<path d="M -2.304 -30.8 Q -12.672 -92.39999999999999 -9.216 -143.22" stroke="#9460a8" stroke-opacity="0.4" stroke-width="2" fill="none" transform="translate(279 189.5) rotate(36)"/>
<path d="M 2.304 -30.8 Q 12.672 -92.39999999999999 9.216 -143.22" stroke="#9460a8" stroke-opacity="0.4" stroke-width="2" fill="none" transform="translate(279 189.5) rotate(36)"/>
<path d="M -4.32 -33.88 Q -18.144000000000002 -92.39999999999999 -12.96 -146.29999999999998" stroke="#7d4a96" stroke-opacity="0.28" stroke-width="1" fill="none" transform="translate(279 189.5) rotate(36)"/>
<path d="M -1.44 -33.88 Q -6.048 -92.39999999999999 -4.32 -146.29999999999998" stroke="#7d4a96" stroke-opacity="0.28" stroke-width="1" fill="none" transform="translate(279 189.5) rotate(36)"/>
<path d="M 1.44 -33.88 Q 6.048 -92.39999999999999 4.32 -146.29999999999998" stroke="#7d4a96" stroke-opacity="0.28" stroke-width="1" fill="none" transform="translate(279 189.5) rotate(36)"/>
<path d="M 4.32 -33.88 Q 18.144000000000002 -92.39999999999999 12.96 -146.29999999999998" stroke="#7d4a96" stroke-opacity="0.28" stroke-width="1" fill="none" transform="translate(279 189.5) rotate(36)"/>
<path d="M 0 -53.9 L 0 -141.68" stroke="#f0e0f8" stroke-opacity="0.35" stroke-width="3" fill="none" transform="translate(279 189.5) rotate(36)"/>
<path d="M -2.5 -6 C -16.240000000000002 -41.5, -29.0 -83.0, -29.0 -122.84 C -29.0 -154.38, -14.5 -166, 0 -166 C 14.5 -166, 29.0 -154.38, 29.0 -122.84 C 29.0 -83.0, 16.240000000000002 -41.5, 2.5 -6 Z" fill="url(#pg)" stroke="#9a62a4" stroke-width="1.2" transform="translate(279 189.5) rotate(78)"/>
<path d="M -2.5 -6 C -16.240000000000002 -41.5, -29.0 -83.0, -29.0 -122.84 C -29.0 -154.38, -14.5 -166, 0 -166 C 14.5 -166, 29.0 -154.38, 29.0 -122.84 C 29.0 -83.0, 16.240000000000002 -41.5, 2.5 -6 Z" fill="url(#xg)" transform="translate(279 189.5) rotate(78)"/>
<path d="M -2.7840000000000003 -33.2 Q -15.312000000000001 -99.6 -11.136000000000001 -154.38" stroke="#9460a8" stroke-opacity="0.4" stroke-width="2" fill="none" transform="translate(279 189.5) rotate(78)"/>
<path d="M 2.7840000000000003 -33.2 Q 15.312000000000001 -99.6 11.136000000000001 -154.38" stroke="#9460a8" stroke-opacity="0.4" stroke-width="2" fill="none" transform="translate(279 189.5) rotate(78)"/>
<path d="M -5.22 -36.52 Q -21.924 -99.6 -15.66 -157.7" stroke="#7d4a96" stroke-opacity="0.28" stroke-width="1" fill="none" transform="translate(279 189.5) rotate(78)"/>
<path d="M -1.74 -36.52 Q -7.308 -99.6 -5.22 -157.7" stroke="#7d4a96" stroke-opacity="0.28" stroke-width="1" fill="none" transform="translate(279 189.5) rotate(78)"/>
<path d="M 1.74 -36.52 Q 7.308 -99.6 5.22 -157.7" stroke="#7d4a96" stroke-opacity="0.28" stroke-width="1" fill="none" transform="translate(279 189.5) rotate(78)"/>
<path d="M 5.22 -36.52 Q 21.924 -99.6 15.66 -157.7" stroke="#7d4a96" stroke-opacity="0.28" stroke-width="1" fill="none" transform="translate(279 189.5) rotate(78)"/>
<path d="M 0 -58.099999999999994 L 0 -152.72" stroke="#f0e0f8" stroke-opacity="0.35" stroke-width="3" fill="none" transform="translate(279 189.5) rotate(78)"/>
<path d="M -2.5 -6 C -15.120000000000001 -38.25, -27.0 -76.5, -27.0 -113.22 C -27.0 -142.29000000000002, -13.5 -153, 0 -153 C 13.5 -153, 27.0 -142.29000000000002, 27.0 -113.22 C 27.0 -76.5, 15.120000000000001 -38.25, 2.5 -6 Z" fill="url(#pgp)" stroke="#9a62a4" stroke-width="1.2" transform="translate(279 189.5) rotate(110)"/>
<path d="M -2.5 -6 C -15.120000000000001 -38.25, -27.0 -76.5, -27.0 -113.22 C -27.0 -142.29000000000002, -13.5 -153, 0 -153 C 13.5 -153, 27.0 -142.29000000000002, 27.0 -113.22 C 27.0 -76.5, 15.120000000000001 -38.25, 2.5 -6 Z" fill="url(#xg)" transform="translate(279 189.5) rotate(110)"/>
<path d="M -2.592 -30.6 Q -14.256 -91.8 -10.368 -142.29000000000002" stroke="#9460a8" stroke-opacity="0.4" stroke-width="2" fill="none" transform="translate(279 189.5) rotate(110)"/>
<path d="M 2.592 -30.6 Q 14.256 -91.8 10.368 -142.29000000000002" stroke="#9460a8" stroke-opacity="0.4" stroke-width="2" fill="none" transform="translate(279 189.5) rotate(110)"/>
<path d="M -4.859999999999999 -33.660000000000004 Q -20.412 -91.8 -14.579999999999998 -145.35" stroke="#7d4a96" stroke-opacity="0.28" stroke-width="1" fill="none" transform="translate(279 189.5) rotate(110)"/>
<path d="M -1.6199999999999999 -33.660000000000004 Q -6.803999999999999 -91.8 -4.859999999999999 -145.35" stroke="#7d4a96" stroke-opacity="0.28" stroke-width="1" fill="none" transform="translate(279 189.5) rotate(110)"/>
<path d="M 1.6199999999999999 -33.660000000000004 Q 6.803999999999999 -91.8 4.859999999999999 -145.35" stroke="#7d4a96" stroke-opacity="0.28" stroke-width="1" fill="none" transform="translate(279 189.5) rotate(110)"/>
<path d="M 4.859999999999999 -33.660000000000004 Q 20.412 -91.8 14.579999999999998 -145.35" stroke="#7d4a96" stroke-opacity="0.28" stroke-width="1" fill="none" transform="translate(279 189.5) rotate(110)"/>
<path d="M 0 -53.55 L 0 -140.76000000000002" stroke="#f0e0f8" stroke-opacity="0.35" stroke-width="3" fill="none" transform="translate(279 189.5) rotate(110)"/>
<path d="M -2.5 -6 C -14.000000000000002 -38.25, -25.0 -76.5, -25.0 -113.22 C -25.0 -142.29000000000002, -12.5 -153, 0 -153 C 12.5 -153, 25.0 -142.29000000000002, 25.0 -113.22 C 25.0 -76.5, 14.000000000000002 -38.25, 2.5 -6 Z" fill="url(#pg)" stroke="#9a62a4" stroke-width="1.2" transform="translate(279 189.5) rotate(153.5)"/>
<path d="M -2.5 -6 C -14.000000000000002 -38.25, -25.0 -76.5, -25.0 -113.22 C -25.0 -142.29000000000002, -12.5 -153, 0 -153 C 12.5 -153, 25.0 -142.29000000000002, 25.0 -113.22 C 25.0 -76.5, 14.000000000000002 -38.25, 2.5 -6 Z" fill="url(#xg)" transform="translate(279 189.5) rotate(153.5)"/>
<path d="M -2.4000000000000004 -30.6 Q -13.200000000000001 -91.8 -9.600000000000001 -142.29000000000002" stroke="#9460a8" stroke-opacity="0.4" stroke-width="2" fill="none" transform="translate(279 189.5) rotate(153.5)"/>
<path d="M 2.4000000000000004 -30.6 Q 13.200000000000001 -91.8 9.600000000000001 -142.29000000000002" stroke="#9460a8" stroke-opacity="0.4" stroke-width="2" fill="none" transform="translate(279 189.5) rotate(153.5)"/>
<path d="M -4.5 -33.660000000000004 Q -18.900000000000002 -91.8 -13.5 -145.35" stroke="#7d4a96" stroke-opacity="0.28" stroke-width="1" fill="none" transform="translate(279 189.5) rotate(153.5)"/>
<path d="M -1.5 -33.660000000000004 Q -6.300000000000001 -91.8 -4.5 -145.35" stroke="#7d4a96" stroke-opacity="0.28" stroke-width="1" fill="none" transform="translate(279 189.5) rotate(153.5)"/>
<path d="M 1.5 -33.660000000000004 Q 6.300000000000001 -91.8 4.5 -145.35" stroke="#7d4a96" stroke-opacity="0.28" stroke-width="1" fill="none" transform="translate(279 189.5) rotate(153.5)"/>
<path d="M 4.5 -33.660000000000004 Q 18.900000000000002 -91.8 13.5 -145.35" stroke="#7d4a96" stroke-opacity="0.28" stroke-width="1" fill="none" transform="translate(279 189.5) rotate(153.5)"/>
<path d="M 0 -53.55 L 0 -140.76000000000002" stroke="#f0e0f8" stroke-opacity="0.35" stroke-width="3" fill="none" transform="translate(279 189.5) rotate(153.5)"/>
<path d="M -2.5 -6 C -12.32 -37.75, -22.0 -75.5, -22.0 -111.74 C -22.0 -140.43, -11.0 -151, 0 -151 C 11.0 -151, 22.0 -140.43, 22.0 -111.74 C 22.0 -75.5, 12.32 -37.75, 2.5 -6 Z" fill="url(#pg)" stroke="#9a62a4" stroke-width="1.2" transform="translate(279 189.5) rotate(191)"/>
<path d="M -2.5 -6 C -12.32 -37.75, -22.0 -75.5, -22.0 -111.74 C -22.0 -140.43, -11.0 -151, 0 -151 C 11.0 -151, 22.0 -140.43, 22.0 -111.74 C 22.0 -75.5, 12.32 -37.75, 2.5 -6 Z" fill="url(#xg)" transform="translate(279 189.5) rotate(191)"/>
<path d="M -2.1119999999999997 -30.200000000000003 Q -11.616 -90.6 -8.447999999999999 -140.43" stroke="#9460a8" stroke-opacity="0.4" stroke-width="2" fill="none" transform="translate(279 189.5) rotate(191)"/>
<path d="M 2.1119999999999997 -30.200000000000003 Q 11.616 -90.6 8.447999999999999 -140.43" stroke="#9460a8" stroke-opacity="0.4" stroke-width="2" fill="none" transform="translate(279 189.5) rotate(191)"/>
<path d="M -3.96 -33.22 Q -16.632 -90.6 -11.879999999999999 -143.45" stroke="#7d4a96" stroke-opacity="0.28" stroke-width="1" fill="none" transform="translate(279 189.5) rotate(191)"/>
<path d="M -1.3199999999999998 -33.22 Q -5.544 -90.6 -3.9599999999999995 -143.45" stroke="#7d4a96" stroke-opacity="0.28" stroke-width="1" fill="none" transform="translate(279 189.5) rotate(191)"/>
<path d="M 1.3199999999999998 -33.22 Q 5.544 -90.6 3.9599999999999995 -143.45" stroke="#7d4a96" stroke-opacity="0.28" stroke-width="1" fill="none" transform="translate(279 189.5) rotate(191)"/>
<path d="M 3.96 -33.22 Q 16.632 -90.6 11.879999999999999 -143.45" stroke="#7d4a96" stroke-opacity="0.28" stroke-width="1" fill="none" transform="translate(279 189.5) rotate(191)"/>
<path d="M 0 -52.849999999999994 L 0 -138.92000000000002" stroke="#f0e0f8" stroke-opacity="0.35" stroke-width="3" fill="none" transform="translate(279 189.5) rotate(191)"/>
<path d="M -2.5 -6 C -13.440000000000001 -36.75, -24.0 -73.5, -24.0 -108.78 C -24.0 -136.71, -12.0 -147, 0 -147 C 12.0 -147, 24.0 -136.71, 24.0 -108.78 C 24.0 -73.5, 13.440000000000001 -36.75, 2.5 -6 Z" fill="url(#pgp)" stroke="#9a62a4" stroke-width="1.2" transform="translate(279 189.5) rotate(228)"/>
<path d="M -2.5 -6 C -13.440000000000001 -36.75, -24.0 -73.5, -24.0 -108.78 C -24.0 -136.71, -12.0 -147, 0 -147 C 12.0 -147, 24.0 -136.71, 24.0 -108.78 C 24.0 -73.5, 13.440000000000001 -36.75, 2.5 -6 Z" fill="url(#xg)" transform="translate(279 189.5) rotate(228)"/>
<path d="M -2.304 -29.400000000000002 Q -12.672 -88.2 -9.216 -136.71" stroke="#9460a8" stroke-opacity="0.4" stroke-width="2" fill="none" transform="translate(279 189.5) rotate(228)"/>
<path d="M 2.304 -29.400000000000002 Q 12.672 -88.2 9.216 -136.71" stroke="#9460a8" stroke-opacity="0.4" stroke-width="2" fill="none" transform="translate(279 189.5) rotate(228)"/>
<path d="M -4.32 -32.34 Q -18.144000000000002 -88.2 -12.96 -139.65" stroke="#7d4a96" stroke-opacity="0.28" stroke-width="1" fill="none" transform="translate(279 189.5) rotate(228)"/>
<path d="M -1.44 -32.34 Q -6.048 -88.2 -4.32 -139.65" stroke="#7d4a96" stroke-opacity="0.28" stroke-width="1" fill="none" transform="translate(279 189.5) rotate(228)"/>
<path d="M 1.44 -32.34 Q 6.048 -88.2 4.32 -139.65" stroke="#7d4a96" stroke-opacity="0.28" stroke-width="1" fill="none" transform="translate(279 189.5) rotate(228)"/>
<path d="M 4.32 -32.34 Q 18.144000000000002 -88.2 12.96 -139.65" stroke="#7d4a96" stroke-opacity="0.28" stroke-width="1" fill="none" transform="translate(279 189.5) rotate(228)"/>
<path d="M 0 -51.449999999999996 L 0 -135.24" stroke="#f0e0f8" stroke-opacity="0.35" stroke-width="3" fill="none" transform="translate(279 189.5) rotate(228)"/>
<path d="M -2.5 -6 C -15.680000000000001 -39.0, -28.0 -78.0, -28.0 -115.44 C -28.0 -145.08, -14.0 -156, 0 -156 C 14.0 -156, 28.0 -145.08, 28.0 -115.44 C 28.0 -78.0, 15.680000000000001 -39.0, 2.5 -6 Z" fill="url(#pgp)" stroke="#9a62a4" stroke-width="1.2" transform="translate(279 189.5) rotate(270)"/>
<path d="M -2.5 -6 C -15.680000000000001 -39.0, -28.0 -78.0, -28.0 -115.44 C -28.0 -145.08, -14.0 -156, 0 -156 C 14.0 -156, 28.0 -145.08, 28.0 -115.44 C 28.0 -78.0, 15.680000000000001 -39.0, 2.5 -6 Z" fill="url(#xg)" transform="translate(279 189.5) rotate(270)"/>
<path d="M -2.688 -31.200000000000003 Q -14.784 -93.6 -10.752 -145.08" stroke="#9460a8" stroke-opacity="0.4" stroke-width="2" fill="none" transform="translate(279 189.5) rotate(270)"/>
<path d="M 2.688 -31.200000000000003 Q 14.784 -93.6 10.752 -145.08" stroke="#9460a8" stroke-opacity="0.4" stroke-width="2" fill="none" transform="translate(279 189.5) rotate(270)"/>
<path d="M -5.04 -34.32 Q -21.168000000000003 -93.6 -15.120000000000001 -148.2" stroke="#7d4a96" stroke-opacity="0.28" stroke-width="1" fill="none" transform="translate(279 189.5) rotate(270)"/>
<path d="M -1.68 -34.32 Q -7.056 -93.6 -5.04 -148.2" stroke="#7d4a96" stroke-opacity="0.28" stroke-width="1" fill="none" transform="translate(279 189.5) rotate(270)"/>
<path d="M 1.68 -34.32 Q 7.056 -93.6 5.04 -148.2" stroke="#7d4a96" stroke-opacity="0.28" stroke-width="1" fill="none" transform="translate(279 189.5) rotate(270)"/>
<path d="M 5.04 -34.32 Q 21.168000000000003 -93.6 15.120000000000001 -148.2" stroke="#7d4a96" stroke-opacity="0.28" stroke-width="1" fill="none" transform="translate(279 189.5) rotate(270)"/>
<path d="M 0 -54.599999999999994 L 0 -143.52" stroke="#f0e0f8" stroke-opacity="0.35" stroke-width="3" fill="none" transform="translate(279 189.5) rotate(270)"/>
<path d="M -2.5 -6 C -14.000000000000002 -37.5, -25.0 -75.0, -25.0 -111.0 C -25.0 -139.5, -12.5 -150, 0 -150 C 12.5 -150, 25.0 -139.5, 25.0 -111.0 C 25.0 -75.0, 14.000000000000002 -37.5, 2.5 -6 Z" fill="url(#pg)" stroke="#9a62a4" stroke-width="1.2" transform="translate(279 189.5) rotate(314.5)"/>
<path d="M -2.5 -6 C -14.000000000000002 -37.5, -25.0 -75.0, -25.0 -111.0 C -25.0 -139.5, -12.5 -150, 0 -150 C 12.5 -150, 25.0 -139.5, 25.0 -111.0 C 25.0 -75.0, 14.000000000000002 -37.5, 2.5 -6 Z" fill="url(#xg)" transform="translate(279 189.5) rotate(314.5)"/>
<path d="M -2.4000000000000004 -30.0 Q -13.200000000000001 -90.0 -9.600000000000001 -139.5" stroke="#9460a8" stroke-opacity="0.4" stroke-width="2" fill="none" transform="translate(279 189.5) rotate(314.5)"/>
<path d="M 2.4000000000000004 -30.0 Q 13.200000000000001 -90.0 9.600000000000001 -139.5" stroke="#9460a8" stroke-opacity="0.4" stroke-width="2" fill="none" transform="translate(279 189.5) rotate(314.5)"/>
<path d="M -4.5 -33.0 Q -18.900000000000002 -90.0 -13.5 -142.5" stroke="#7d4a96" stroke-opacity="0.28" stroke-width="1" fill="none" transform="translate(279 189.5) rotate(314.5)"/>
<path d="M -1.5 -33.0 Q -6.300000000000001 -90.0 -4.5 -142.5" stroke="#7d4a96" stroke-opacity="0.28" stroke-width="1" fill="none" transform="translate(279 189.5) rotate(314.5)"/>
<path d="M 1.5 -33.0 Q 6.300000000000001 -90.0 4.5 -142.5" stroke="#7d4a96" stroke-opacity="0.28" stroke-width="1" fill="none" transform="translate(279 189.5) rotate(314.5)"/>
<path d="M 4.5 -33.0 Q 18.900000000000002 -90.0 13.5 -142.5" stroke="#7d4a96" stroke-opacity="0.28" stroke-width="1" fill="none" transform="translate(279 189.5) rotate(314.5)"/>
<path d="M 0 -52.5 L 0 -138.0" stroke="#f0e0f8" stroke-opacity="0.35" stroke-width="3" fill="none" transform="translate(279 189.5) rotate(314.5)"/>
<circle cx="279" cy="189.5" r="75" fill="url(#core)"/>
<circle cx="279" cy="189.5" r="34" fill="#5a2f60" opacity="0.45"/>
<polygon points="309.0,189.5 294.0,215.5 264.0,215.5 249.0,189.5 264.0,163.5 294.0,163.5" fill="#4e3d2a" stroke="#4e3d2a" stroke-width="5" stroke-linejoin="round"/>
<polygon points="304.5,189.5 291.8,211.6 266.2,211.6 253.5,189.5 266.2,167.4 291.8,167.4" fill="#a8924f" stroke="#a8924f" stroke-width="5" stroke-linejoin="round"/>
<circle cx="302.2" cy="195.7" r="3.2" fill="#cbb877" opacity="0.8"/>
<circle cx="296.0" cy="206.5" r="3.2" fill="#cbb877" opacity="0.8"/>
<circle cx="285.2" cy="212.7" r="3.2" fill="#cbb877" opacity="0.8"/>
<circle cx="272.8" cy="212.7" r="3.2" fill="#cbb877" opacity="0.8"/>
<circle cx="262.0" cy="206.5" r="3.2" fill="#cbb877" opacity="0.8"/>
<circle cx="255.8" cy="195.7" r="3.2" fill="#cbb877" opacity="0.8"/>
<circle cx="255.8" cy="183.3" r="3.2" fill="#cbb877" opacity="0.8"/>
<circle cx="262.0" cy="172.5" r="3.2" fill="#cbb877" opacity="0.8"/>
<circle cx="272.8" cy="166.3" r="3.2" fill="#cbb877" opacity="0.8"/>
<circle cx="285.2" cy="166.3" r="3.2" fill="#cbb877" opacity="0.8"/>
<circle cx="296.0" cy="172.5" r="3.2" fill="#cbb877" opacity="0.8"/>
<circle cx="302.2" cy="183.3" r="3.2" fill="#cbb877" opacity="0.8"/>
<polygon points="296.5,189.5 287.8,204.7 270.2,204.7 261.5,189.5 270.2,174.3 287.8,174.3" fill="#3f4a45" stroke="#3f4a45" stroke-width="5" stroke-linejoin="round"/>
<circle cx="279" cy="189.5" r="15.5" fill="url(#ctr)"/>
</g></g></svg>
<div class="abs" style="left:360px;top:203px;width:248px;height:267.500px;background:#fff;border-radius:3px;box-shadow:0 1px 3px rgba(0,0,0,.22),0 1px 2px rgba(0,0,0,.12)"></div>
<div class="abs" style="left:360px;top:203px;width:248px;height:36.700px;background:#006c00;border-radius:3px 3px 0 0"></div>
<span class="t" style="left:369.20px;top:213.00px;font-family:'Liberation Sans',sans-serif;font-size:16.5px;font-weight:bold;color:#fff;transform:scaleX(0.9271);">Rotate</span>
<div class="abs" style="left:442.2px;top:255.300px;width:39.600px;height:39.400px;border:1px solid #eee;background:#fff"></div>
<svg style="left:448.25px;top:261.3px" width="27.5" height="27.5" viewBox="0 0 24 24" fill="#555d55" ><path d="M7.110 8.530L5.700 7.110C4.800 8.270 4.240 9.610 4.070 11h2.020c.14-.87.49-1.720 1.020-2.470zM6.090 13H4.070c.17 1.390.72 2.730 1.620 3.890l1.410-1.420c-.52-.75-.87-1.590-1.010-2.470zm1.010 5.320c1.160.9 2.510 1.440 3.900 1.610V17.900c-.87-.15-1.710-.49-2.460-1.030L7.100 18.320zM13 4.070V1L8.450 5.550 13 10V6.090c2.840.48 5 2.940 5 5.910s-2.160 5.430-5 5.910v2.020c3.950-.49 7-3.850 7-7.930s-3.050-7.440-7-7.930z"/></svg>
<div class="abs" style="left:486.2px;top:255.300px;width:39.600px;height:39.400px;border:1px solid #eee;background:#fff"></div>
<svg style="left:492.25px;top:261.3px" width="27.5" height="27.5" viewBox="0 0 24 24" fill="#555d55" ><path d="M15.55 5.55L11 1v3.07C7.06 4.56 4 7.92 4 12s3.05 7.44 7 7.93v-2.02c-2.84-.48-5-2.94-5-5.91s2.16-5.43 5-5.910V10l4.550-4.450zM19.930 11c-.17-1.390-.72-2.730-1.620-3.890l-1.420 1.420c.54.750.88 1.600 1.020 2.470h2.020zM13 17.900v2.020c1.390-.17 2.740-.710 3.900-1.610l-1.440-1.440c-.75.540-1.590.890-2.460 1.030zm3.890-2.420l1.420 1.410c.9-1.160 1.450-2.500 1.620-3.890h-2.020c-.14.870-.48 1.720-1.020 2.480z"/></svg>
<div class="abs" style="left:370px;top:310px;width:228px;height:1px;background:#e8e8e8"></div>
<span class="t" style="left:370.60px;top:316.00px;font-family:'Liberation Sans',sans-serif;font-size:14.3px;font-weight:normal;color:#6a6a6a;transform:scaleX(0.9487);">Angle</span>
<div class="abs" style="left:376px;top:344.200px;width:139px;height:2.200px;background:#bcaaa4"></div>
<div class="abs" style="left:362.500px;top:337.800px;width:15px;height:15px;border-radius:8px;border:2px solid #bcaaa4;background:#fff"></div>
<div class="abs" style="left:525.500px;top:320.500px;width:72.200px;height:33.200px;border-radius:3px;border:2px solid #bcaaa4;background:#fff"></div>
<span class="t" style="left:532.30px;top:330.00px;font-family:'Liberation Sans',sans-serif;font-size:14.5px;font-weight:normal;color:#8a8a8a;">0</span>
<div class="abs" style="left:370px;top:379px;width:228px;height:1px;background:#e8e8e8"></div>
<div class="abs" style="left:380.6px;top:420.200px;width:96.6px;height:35.700px;background:#fafafa;border-radius:2px;box-shadow:0 2px 2px rgba(0,0,0,.14),0 3px 1px -2px rgba(0,0,0,.12),0 1px 5px rgba(0,0,0,.2)"></div>
<div class="abs" style="left:490.8px;top:420.200px;width:96px;height:35.700px;background:#fafafa;border-radius:2px;box-shadow:0 2px 2px rgba(0,0,0,.14),0 3px 1px -2px rgba(0,0,0,.12),0 1px 5px rgba(0,0,0,.2)"></div>
<span class="t" style="left:402.80px;top:430.00px;font-family:'Liberation Sans',sans-serif;font-size:14px;font-weight:normal;color:#262626;transform:scaleX(0.9296);">CANCEL</span>
<span class="t" style="left:518.00px;top:430.00px;font-family:'Liberation Sans',sans-serif;font-size:14px;font-weight:normal;color:#262626;transform:scaleX(0.9340);">APPLY</span>
<div class="abs" style="left:716px;top:118px;width:285px;height:55px;background:#fff;border-radius:3px;box-shadow:0 1px 3px rgba(0,0,0,.18),0 1px 2px rgba(0,0,0,.1)"></div>
<span class="t" style="left:740.40px;top:139.00px;font-family:'Liberation Sans',sans-serif;font-size:13.6px;font-weight:normal;color:#2a2a2a;transform:scaleX(0.9369);-webkit-text-stroke:0.3px #2a2a2a;">OPEN</span>
<span class="t" style="left:793.00px;top:139.00px;font-family:'Liberation Sans',sans-serif;font-size:13.6px;font-weight:bold;color:#dcdcdc;transform:scaleX(0.9586);">HISTORY</span>
<span class="t" style="left:866.60px;top:139.00px;font-family:'Liberation Sans',sans-serif;font-size:13.6px;font-weight:normal;color:#2a2a2a;transform:scaleX(0.9422);-webkit-text-stroke:0.3px #2a2a2a;">LAYERS</span>
<div class="abs" style="left:926px;top:129px;width:56px;height:33.800px;background:#55a857;border-radius:4px"></div>
<span class="t" style="left:939.00px;top:138.00px;font-family:'Liberation Sans',sans-serif;font-size:15.2px;font-weight:bold;color:#fff;transform:scaleX(0.8511);">Save</span>
<div class="abs" style="left:1071px;top:123px;width:275px;height:126.500px;background:#fff;border-radius:0 0 3px 3px;box-shadow:0 1px 3px rgba(0,0,0,.2),0 1px 2px rgba(0,0,0,.1)"></div>
<div class="abs" style="left:1071px;top:122.700px;width:275px;height:40px;background:#006c00"></div>
<span class="t" style="left:1091.40px;top:134.00px;font-family:'Liberation Sans',sans-serif;font-size:16.5px;font-weight:bold;color:#fff;transform:scaleX(0.8944);">Layers</span>
<svg style="left:1311.400px;top:138.100px" width="11.400" height="7.600" viewBox="0 0 12 8"><path d="M1 6.800 L6 1.800 L11 6.800" stroke="#fff" stroke-width="2.100" fill="none"/></svg>
<div class="abs" style="left:1084px;top:178px;width:249px;height:46.500px;border:1px solid #ececec;background:#fff"></div>
<div class="abs" style="left:1115.9px;top:190px;width:1px;height:26px;background:#eee"></div>
<div class="abs" style="left:1148.2px;top:190px;width:1px;height:26px;background:#eee"></div>
<div class="abs" style="left:1180.9px;top:190px;width:1px;height:26px;background:#eee"></div>
<svg style="left:1092.4px;top:193px" width="18.5" height="18.5" viewBox="0 0 24 24" fill="#cbbdb8" ><path d="M12 4.500C7 4.500 2.730 7.610 1 12c1.730 4.390 6 7.500 11 7.500s9.270-3.110 11-7.500c-1.730-4.390-6-7.500-11-7.500zM12 17c-2.760 0-5-2.240-5-5s2.240-5 5-5 5 2.240 5 5-2.240 5-5 5zm0-8c-1.660 0-3 1.340-3 3s1.340 3 3 3 3-1.340 3-3-1.340-3-3-3z"/></svg>
<svg style="left:1125.2px;top:192.5px" width="18" height="18" viewBox="0 0 24 24" fill="#cbbdb8" ><path d="M6 19c0 1.100.9 2 2 2h8c1.100 0 2-.9 2-2V7H6v12zM19 4h-3.500l-1-1h-5l-1 1H5v2h14V4z"/></svg>
<svg style="left:1158px;top:192.5px" width="18" height="18" viewBox="0 0 24 24" fill="#cbbdb8" ><path d="M12 17c1.1 0 2-.9 2-2s-.9-2-2-2-2 .9-2 2 .9 2 2 2zm6-9h-1V6c0-2.76-2.24-5-5-5S7 3.24 7 6v2H6c-1.1 0-2 .9-2 2v10c0 1.1.9 2 2 2h12c1.1 0 2-.9 2-2V10c0-1.1-.9-2-2-2zM8.9 6c0-1.71 1.39-3.1 3.1-3.1s3.1 1.390 3.1 3.1v2H8.9V6zM18 20H6V10h12v10z"/></svg>
<span class="t" style="left:1191.00px;top:198.00px;font-family:'Liberation Sans',sans-serif;font-size:14.5px;font-weight:normal;color:#444;transform:scaleX(0.9582);">Main Image</span>
<svg style="left:724.8px;top:375.7px" width="13" height="20" viewBox="0 0 13 20"><path d="M0.600 0.800 V16 L4.200 12.600 L6.600 18.400 L9 17.400 L6.600 11.800 H11.600 Z" fill="#fff" stroke="#111" stroke-width="1" stroke-linejoin="round"/></svg>
<div id="tabstrip" class="abs"></div>
<div id="toolbar" class="abs"></div>
<div id="omni" class="abs"></div>
<svg style="left:0;top:0" width="260" height="34"><path d="M0 34 C6 34 8 30 8 26 V8 C8 3 11 0 16 0 H240 C245 0 248 3 248 8 V26 C248 30 250 34 256 34 Z" fill="#6e4ca6"/></svg>
<div class="abs" style="left:20px;top:9.2px;width:16px;height:15.8px;border-radius:1.5px;background:#e87a24"></div>
<svg style="left:20px;top:9.2px" width="16" height="16" viewBox="0 0 16 16"><g fill="#fff"><circle cx="5" cy="5.6" r="2.9"/><circle cx="11" cy="5.6" r="2.9"/><circle cx="5" cy="10" r="2.9"/><circle cx="11" cy="10" r="2.9"/><rect x="4.6" y="4.6" width="6.8" height="6.4"/></g><path d="M5.1 5.2 V6.4 M10.9 5.200 V6.400 M5.100 9.200 V10.400 M10.900 9.200 V10.400 M5.600 7.800 H10.400" stroke="#e87a24" stroke-width="1.300" stroke-linecap="round" fill="none"/><path d="M7.300 2.700 H8.700 M7.300 12.900 H8.700" stroke="#e87a24" stroke-width="0.010"/></svg>
<span class="t" style="left:44.50px;top:11.00px;font-family:'Liberation Sans',sans-serif;font-size:12px;font-weight:normal;color:#ffffff;transform:scaleX(0.9846);">Image Editor</span>
<svg style="left:227px;top:13px" width="9" height="9" viewBox="0 0 9 9"><path d="M0.7 0.7 L8.3 8.3 M8.3 0.7 L0.7 8.3" stroke="#fff" stroke-width="1.6" fill="none"/></svg>
<svg style="left:264px;top:11px" width="12" height="12" viewBox="0 0 12 12"><path d="M6 0 V12 M0 6 H12" stroke="#fff" stroke-width="2" fill="none"/></svg>
<svg style="left:1199px;top:10px" width="12" height="8" viewBox="0 0 12 8"><path d="M0.7 0.7 L6 6.3 L11.3 0.7" stroke="#e6dff2" stroke-width="1.2" fill="none"/></svg>
<div class="abs" style="left:1246px;top:14px;width:10px;height:1.3px;background:#fff"></div>
<svg style="left:1291.6px;top:9.2px" width="10.5" height="10.5" viewBox="0 0 12 12"><path d="M0.6 2.6 H8.4 V11.4 H0.6 Z M2.6 2.6 V0.6 H11.4 V9.4 H8.4" stroke="#fff" stroke-width="1.2" fill="none"/></svg>
<svg style="left:1338px;top:9px" width="11" height="11" viewBox="0 0 11 11"><path d="M0.5 0.5 L10.5 10.5 M10.5 0.5 L0.5 10.5" stroke="#fff" stroke-width="1.2" fill="none"/></svg>
<svg style="left:14px;top:44px" width="16" height="16" viewBox="0 0 16 16"><path d="M15 8 H2.5 M8 2 L2 8 L8 14" stroke="#fff" stroke-width="2" fill="none"/></svg>
<svg style="left:46px;top:44px" width="16" height="16" viewBox="0 0 16 16"><path d="M1 8 H13.5 M8 2 L14 8 L8 14" stroke="#9a82c6" stroke-width="2" fill="none"/></svg>
<svg style="left:78px;top:44px" width="16" height="16" viewBox="0 0 16 16"><path d="M13.2 5.2 A6 6 0 1 0 14 8" stroke="#fff" stroke-width="2" fill="none"/><path d="M14.6 1 V6.6 H9 Z" fill="#fff"/></svg>
<svg style="left:118px;top:45px" width="15" height="15" viewBox="0 0 15 15"><circle cx="7.5" cy="7.5" r="6.3" stroke="#d6cce8" stroke-width="1.4" fill="none"/><path d="M7.5 6.6 V11 M7.5 3.9 V5.3" stroke="#d6cce8" stroke-width="1.5"/></svg>
<span class="t" style="left:142.50px;top:45.00px;font-family:'Liberation Sans',sans-serif;font-size:14px;font-weight:normal;color:#ffffff;transform:scaleX(0.9807);">localhost</span>
<span class="t" style="left:196.90px;top:45.00px;font-family:'Liberation Sans',sans-serif;font-size:14px;font-weight:normal;color:#c9bde0;transform:scaleX(1.0640);">/editors/</span>
<svg style="left:1200px;top:44px" width="17" height="16" viewBox="0 0 17 16"><path d="M1 5.5 V14.5 H12.5 V12" stroke="#b9a9d8" stroke-width="1.3" fill="none"/><path d="M4.5 11 C4.8 7.6 7 5.8 10.5 5.6 V2.8 L15.6 7 L10.5 11.2 V8.3 C7.8 8.3 6 9 4.5 11 Z" stroke="#b9a9d8" stroke-width="1.3" fill="none" stroke-linejoin="round"/></svg>
<svg style="left:1232px;top:44px" width="16" height="16" viewBox="0 0 24 24"><path d="M12 2.5 L14.9 9 L22 9.7 L16.6 14.4 L18.2 21.4 L12 17.7 L5.8 21.4 L7.4 14.4 L2 9.7 L9.1 9 Z" stroke="#e3dbf0" stroke-width="2.2" fill="none" stroke-linejoin="round"/></svg>
<div class="abs" style="left:1273px;top:45px;width:14px;height:14px;background:#fff"></div><div class="abs" style="left:1275px;top:47px;width:5px;height:10px;background:#6e4ca6"></div>
<div class="abs" style="left:1301px;top:41px;width:22px;height:22px;border-radius:11px;background:#9c7869"></div>
<span class="t" style="left:1307.33px;top:46.00px;font-family:'Liberation Sans',sans-serif;font-size:12px;font-weight:normal;color:#f3ece8;">O</span>
<div class="abs" style="left:1343px;top:45.4px;width:3.2px;height:3.2px;border-radius:2px;background:#fff"></div>
<div class="abs" style="left:1343px;top:50.699999999999996px;width:3.2px;height:3.2px;border-radius:2px;background:#fff"></div>
<div class="abs" style="left:1343px;top:56.0px;width:3.2px;height:3.2px;border-radius:2px;background:#fff"></div>
<svg style="left:13px;top:76px" width="18" height="16" viewBox="0 0 18 16"><path d="M3.4 2.2 L9.8 3.4 L7.4 14.2 L1 12.8 Z" fill="#98a817"/><path d="M10.2 9.2 L15.4 7.8 L16.8 12.6 L11.6 14.2 Z" fill="#153a5c"/></svg>
<div class="abs" style="left:46px;top:76px;width:16px;height:16px;background:#0f9d58;"></div>
<div class="abs" style="left:51.6px;top:78.4px;width:3.2px;height:11.8px;background:#e6fff0;"></div>
<div class="abs" style="left:48.2px;top:80.2px;width:11.8px;height:3px;background:#e6fff0;"></div>
<svg style="left:78px;top:76px" width="16" height="16" viewBox="0 0 16 16"><path d="M8 0.3 L14.8 3.6 V12.4 L8 15.7 L1.2 12.4 V3.6 Z" fill="#f9a11b"/><path d="M4.2 5 H10.4 V7.2 M4.2 5 V10 H6.4" stroke="#fff3d6" stroke-width="1.2" fill="none"/><path d="M7.6 11.2 V8.8 M9.6 11.2 V7.6 M11.6 11.2 V9.4" stroke="#fff3d6" stroke-width="1.2"/></svg>
<svg style="left:111px;top:76px" width="15" height="16" viewBox="0 0 15 16"><rect x="10.2" y="1.2" width="3.6" height="13.6" rx="1.8" fill="#f9ab00"/><rect x="5.2" y="6.2" width="3.6" height="8.6" rx="1.8" fill="#e8710a"/><circle cx="2.2" cy="13" r="1.8" fill="#e8710a"/></svg>
<div class="abs" style="left:142px;top:76px;width:16px;height:16px;background:linear-gradient(180deg,#0a1766,#0b3f8e);"></div>
<span class="t" style="left:142.80px;top:79.00px;font-family:'Liberation Sans',sans-serif;font-size:11px;font-weight:bold;color:#fff;transform:scaleX(0.5742);">IEEE</span>
<svg style="left:172.800px;top:74.700px" width="18" height="18" viewBox="0 0 17 17"><path d="M0.6 16.4 L1.9 12.4 A7.6 7.6 0 1 1 4.8 15.2 Z" fill="#fff"/><circle cx="8.7" cy="8.2" r="6.4" fill="#25d366"/><path d="M6.2 4.8 C5.2 5.6 5.6 7.6 7.4 9.4 C9.2 11.2 11.2 11.8 12 10.6 L10.4 9.4 L9.6 10 C8.6 9.6 7.6 8.6 7.1 7.6 L7.8 6.8 Z" fill="#fff"/></svg>
<svg style="left:206px;top:76px" width="16" height="16" viewBox="0 0 16 16"><circle cx="8" cy="8" r="8" fill="#2f9cec"/><path d="M3.2 7.8 L12 4.2 L10.6 12 L7.6 9.8 L6.6 11.4 L6.2 9 Z" fill="#fff"/></svg>
<svg style="left:238px;top:76px" width="16" height="16" viewBox="0 0 48 48"><circle cx="24" cy="24" r="24" fill="#fff"/><g transform="translate(7.2 7.2) scale(0.7)"><path fill="#EA4335" d="M24 9.5c3.54 0 6.71 1.22 9.21 3.6l6.85-6.85C35.9 2.38 30.47 0 24 0 14.62 0 6.51 5.38 2.56 13.22l7.98 6.19C12.43 13.72 17.74 9.5 24 9.5z"/><path fill="#4285F4" d="M46.98 24.55c0-1.57-.15-3.09-.38-4.55H24v9.02h12.94c-.58 2.96-2.26 5.48-4.78 7.18l7.73 6c4.51-4.18 7.09-10.36 7.09-17.65z"/><path fill="#FBBC05" d="M10.53 28.59c-.48-1.45-.76-2.99-.76-4.59s.27-3.14.76-4.59l-7.98-6.19C.92 16.46 0 20.12 0 24c0 3.88.92 7.54 2.56 10.78l7.97-6.19z"/><path fill="#34A853" d="M24 48c6.48 0 11.93-2.13 15.89-5.81l-7.73-6c-2.15 1.45-4.92 2.3-8.16 2.3-6.26 0-11.57-4.22-13.47-9.91l-7.98 6.19C6.51 42.62 14.62 48 24 48z"/></g></svg>
<svg style="left:270px;top:76px" width="16" height="16" viewBox="0 0 48 48"><circle cx="24" cy="24" r="24" fill="#fff"/><g transform="translate(7.2 7.2) scale(0.7)"><path fill="#EA4335" d="M24 9.5c3.54 0 6.71 1.22 9.21 3.6l6.85-6.85C35.9 2.38 30.47 0 24 0 14.62 0 6.51 5.38 2.56 13.22l7.98 6.19C12.43 13.72 17.74 9.5 24 9.5z"/><path fill="#4285F4" d="M46.98 24.55c0-1.57-.15-3.09-.38-4.55H24v9.02h12.94c-.58 2.96-2.26 5.48-4.78 7.18l7.73 6c4.51-4.18 7.09-10.36 7.09-17.65z"/><path fill="#FBBC05" d="M10.53 28.59c-.48-1.45-.76-2.99-.76-4.59s.27-3.14.76-4.59l-7.98-6.19C.92 16.46 0 20.12 0 24c0 3.88.92 7.54 2.56 10.78l7.97-6.19z"/><path fill="#34A853" d="M24 48c6.48 0 11.93-2.13 15.89-5.81l-7.73-6c-2.15 1.45-4.92 2.3-8.16 2.3-6.26 0-11.57-4.22-13.47-9.91l-7.98 6.19C6.51 42.62 14.62 48 24 48z"/></g></svg>
<svg style="left:302px;top:76px" width="16" height="16" viewBox="0 0 16 16"><path fill="#1f2233" d="M8 0C3.58 0 0 3.58 0 8c0 3.54 2.29 6.53 5.47 7.59.4.07.55-.17.55-.38 0-.19-.01-.82-.01-1.49-2.010.37-2.530-.49-2.690-.94-.09-.23-.48-.94-.82-1.130-.28-.15-.68-.52-.01-.53.63-.01 1.080.58 1.230.82.72 1.210 1.870.87 2.330.66.070-.52.280-.87.510-1.070-1.780-.2-3.640-.89-3.640-3.950 0-.87.310-1.590.82-2.150-.08-.2-.36-1.020.08-2.120 0 0 .67-.21 2.200.82.640-.18 1.320-.27 2-.27s1.360.09 2 .27c1.530-1.040 2.200-.82 2.200-.82.440 1.100.16 1.920.08 2.120.51.560.82 1.270.82 2.150 0 3.070-1.870 3.750-3.650 3.950.29.250.54.730.54 1.480 0 1.070-.01 1.930-.01 2.200 0 .21.150.46.550.38A8.013 8.013 0 0016 8c0-4.420-3.580-8-8-8z"/></svg>
<span class="t" style="left:326.00px;top:78.00px;font-family:'Liberation Sans',sans-serif;font-size:12px;font-weight:normal;color:#f4f0fa;transform:scaleX(0.8741);">PY</span>
<svg style="left:356px;top:76px" width="16" height="16" viewBox="0 0 48 48"><circle cx="24" cy="24" r="24" fill="#fff"/><g transform="translate(7.2 7.2) scale(0.7)"><path fill="#EA4335" d="M24 9.5c3.54 0 6.71 1.22 9.21 3.6l6.85-6.85C35.9 2.38 30.47 0 24 0 14.62 0 6.51 5.38 2.56 13.22l7.98 6.19C12.43 13.72 17.74 9.5 24 9.5z"/><path fill="#4285F4" d="M46.98 24.55c0-1.57-.15-3.09-.38-4.55H24v9.02h12.94c-.58 2.96-2.26 5.48-4.78 7.18l7.73 6c4.51-4.18 7.09-10.36 7.09-17.65z"/><path fill="#FBBC05" d="M10.53 28.59c-.48-1.45-.76-2.99-.76-4.59s.27-3.14.76-4.59l-7.98-6.19C.92 16.46 0 20.12 0 24c0 3.88.92 7.54 2.56 10.78l7.97-6.19z"/><path fill="#34A853" d="M24 48c6.48 0 11.93-2.13 15.89-5.81l-7.73-6c-2.15 1.45-4.92 2.3-8.16 2.3-6.26 0-11.57-4.22-13.47-9.91l-7.98 6.19C6.51 42.62 14.62 48 24 48z"/></g></svg>
<span class="t" style="left:380.00px;top:78.00px;font-family:'Liberation Sans',sans-serif;font-size:12px;font-weight:normal;color:#f4f0fa;transform:scaleX(1.1034);">git</span>
<div class="abs" style="left:411px;top:76px;width:16px;height:16px;background:#fff;"></div>
<svg style="left:411px;top:76px" width="16" height="16" viewBox="0 0 16 16"><path d="M4 3.6 H2.4 V12.4 H4 M12 3.6 H13.600 V12.4 H12" stroke="#2f8fd8" stroke-width="1.2" fill="none"/><path d="M5.4 5 V11 M7.200 5 V11 M8.800 5 V11 M10.600 5 V11" stroke="#2f8fd8" stroke-width="1.1"/></svg>
<svg style="left:444px;top:78px" width="14" height="13" viewBox="0 0 14 13"><rect x="0.500" y="2" width="13" height="10.500" rx="1.500" fill="#e8e4f4"/><rect x="0.500" y="2" width="13" height="3" fill="#4a8fe8"/><path d="M4.500 0.800 H9.500 V2 H4.500 Z" fill="#5a4a4a"/><path d="M7.500 6.500 L9 9 L10.500 6.500 M9 9 V12" stroke="#222" stroke-width="1.400" fill="none"/></svg>
<div class="abs" style="left:475px;top:76px;width:16px;height:9px;background:#cfd9fb;"></div>
<svg style="left:475px;top:76px" width="16" height="16" viewBox="0 0 16 16"><path d="M1 12 A8 8 0 0 1 15 12" stroke="#1f5de6" stroke-width="2.400" fill="none"/><path d="M12.500 9 A7 7 0 0 1 15.300 13.500" stroke="#e64ad0" stroke-width="2" fill="none"/><path d="M4 13.500 A4.500 4.500 0 0 1 12 13.500" stroke="#fff" stroke-width="2" fill="none"/><circle cx="8" cy="13.600" r="2.200" fill="#2f7af0"/></svg>
<span class="t" style="left:499.00px;top:78.00px;font-family:'Liberation Sans',sans-serif;font-size:12px;font-weight:normal;color:#f4f0fa;transform:scaleX(1.0117);">url</span>
<div class="abs" style="left:529px;top:78px;width:16px;height:11.6px;background:#f51717;border-radius:3px"></div>
<svg style="left:534.500px;top:81px" width="6" height="6" viewBox="0 0 6 6"><path d="M0.500 0 L5.500 3 L0.500 6 Z" fill="#fff"/></svg>
<div class="abs" style="left:560.6px;top:76px;width:16.4px;height:16px;background:#ffe01a;"></div>
<svg style="left:560.600px;top:76px" width="16" height="16" viewBox="0 0 16 16"><circle cx="8.600" cy="7.400" r="2.500" stroke="#111" stroke-width="1.800" fill="none"/><path d="M6.100 7 V12.600" stroke="#111" stroke-width="1.800"/></svg>
<svg style="left:592.500px;top:76.500px" width="16" height="15" viewBox="0 0 16 15"><circle cx="4" cy="3.600" r="3" fill="#f5a623"/><circle cx="10" cy="3.600" r="3" fill="#f5a623"/><circle cx="4" cy="3.600" r="1.200" fill="#6e4ca6"/><circle cx="10" cy="3.600" r="1.200" fill="#6e4ca6"/><rect x="2" y="6.400" width="10.500" height="7.600" rx="1" fill="#f5a623"/><path d="M12.500 9 L15.800 7.400 V13 L12.500 11.400 Z" fill="#f5a623"/><path d="M4 9 H10.500 M4 11.200 H10.500" stroke="#fff2d0" stroke-width="1"/></svg>
<svg style="left:625px;top:76px" width="16" height="16" viewBox="0 0 16 16"><circle cx="8" cy="8" r="8" fill="#2b2530"/><path d="M3.500 4.500 H5.200 L6.400 9.600 H11 L12 6 H5.600" stroke="#e2992a" stroke-width="1.100" fill="none"/><circle cx="7" cy="11.600" r="0.900" fill="#e2992a"/><circle cx="10.400" cy="11.600" r="0.900" fill="#e2992a"/></svg>
<svg style="left:657px;top:76px" width="16" height="16" viewBox="0 0 16 16"><circle cx="8" cy="8" r="6.300" stroke="#3f9a52" stroke-width="2.600" fill="none"/></svg>
<svg style="left:688.500px;top:76.500px" width="17" height="15" viewBox="0 0 17 15"><path d="M8.500 13.800 C3 11 0.800 7.600 1 4.600 C1.200 1.800 4.600 0.200 7 2.800 C9 5 9.800 8 8.600 10.400 C7.600 12 5.600 11 6 9 C6.400 7 8.400 4.400 10.600 2.200 C13 0.200 16 1.800 16 4.800 C16 8 13.600 11.400 8.500 13.800 Z" stroke="#4fb3e8" stroke-width="1.300" fill="none"/></svg>
<span class="t" style="left:713.00px;top:78.00px;font-family:'Liberation Sans',sans-serif;font-size:12px;font-weight:normal;color:#f4f0fa;transform:scaleX(0.9366);">Go</span>
<div class="abs" style="left:745px;top:76px;width:16px;height:16px;background:#0b0b0b;"></div>
<svg style="left:745px;top:76px" width="16" height="16" viewBox="0 0 16 16"><path d="M0 0 H6.500 C10 2 11.500 5 11 8 C10.800 10 11.500 12 10.500 16 H0 Z" fill="#fff"/><path d="M8.500 7.200 L15 8.600 L14.500 10.600 L9.200 9.400 Z" fill="#f0a020"/><circle cx="5.600" cy="6.600" r="0.900" fill="#111"/></svg>
<div class="abs" style="left:777px;top:76px;width:16px;height:16px;background:#050505;"></div>
<span class="t" style="left:778.20px;top:77.00px;font-family:'Liberation Sans',sans-serif;font-size:14.5px;font-weight:bold;color:#fff;transform:scaleX(1.1245);">cl</span>
<svg style="left:809px;top:76px" width="16" height="16" viewBox="0 0 16 16"><circle cx="8" cy="8" r="8" fill="#fc3f1d"/></svg>
<span class="t" style="left:813.23px;top:79.00px;font-family:'Liberation Sans',sans-serif;font-size:10.5px;font-weight:bold;color:#fff;">Я</span>
<svg style="left:841px;top:76px" width="16" height="16" viewBox="0 0 48 48"><circle cx="24" cy="24" r="24" fill="#fff"/><g transform="translate(7.2 7.2) scale(0.7)"><path fill="#EA4335" d="M24 9.5c3.54 0 6.71 1.22 9.21 3.6l6.85-6.85C35.9 2.38 30.47 0 24 0 14.62 0 6.51 5.38 2.56 13.22l7.98 6.19C12.43 13.72 17.74 9.5 24 9.5z"/><path fill="#4285F4" d="M46.98 24.55c0-1.57-.15-3.09-.38-4.55H24v9.02h12.94c-.58 2.96-2.26 5.48-4.78 7.18l7.73 6c4.51-4.18 7.09-10.36 7.09-17.65z"/><path fill="#FBBC05" d="M10.53 28.59c-.48-1.45-.76-2.99-.76-4.59s.27-3.14.76-4.59l-7.98-6.19C.92 16.46 0 20.12 0 24c0 3.88.92 7.54 2.56 10.78l7.97-6.19z"/><path fill="#34A853" d="M24 48c6.48 0 11.93-2.13 15.89-5.81l-7.73-6c-2.15 1.45-4.92 2.3-8.16 2.3-6.26 0-11.57-4.22-13.47-9.91l-7.98 6.19C6.51 42.62 14.62 48 24 48z"/></g></svg>
<svg style="left:873px;top:76px" width="15" height="16" viewBox="0 0 15 16"><path d="M0.500 9.600 L4.400 8 L6.600 9.800 L4 11.600 Z" fill="#3f8fe0"/><path d="M4.400 8 C6.500 6 8 2.500 9.600 1 C11 3.500 12.500 9 14.400 12.400 C12.500 11.600 11.500 12.600 10.400 14.600 C9 12.600 8 11.400 6.600 9.800 Z" fill="#e86a1a"/><path d="M9.600 1 C11 3.500 12.500 9 14.400 12.400 C13 11.800 12.200 12 11.500 13 C11 9 10.400 4 9.600 1 Z" fill="#f9b24a"/><path d="M4 11.600 L6.600 9.800 C8 11.400 9 12.600 10.400 14.600 C9 16 7.500 13.600 4 11.600 Z" fill="#8a2a10"/></svg>
<svg style="left:904.500px;top:77px" width="17" height="14" viewBox="0 0 17 14"><path d="M0.800 8 C4 3.400 13 3.400 16.200 8 C13 12.400 4 12.400 0.800 8 Z" fill="#f09a10"/><circle cx="8.500" cy="8" r="2.300" fill="#d6281c"/><path d="M3 3.600 L4 1.600 M6 2.600 L6.500 0.600 M8.500 2.400 V0.300 M11 2.600 L10.500 0.600 M14 3.600 L13 1.600 M3 12.400 L2.400 13.400 M14 12.400 L14.600 13.400" stroke="#e0401c" stroke-width="1"/></svg>
<svg style="left:937.500px;top:76.500px" width="15" height="15" viewBox="0 0 15 15"><circle cx="7.500" cy="7.500" r="7.200" fill="#fff"/><path d="M3 3.400 C5 2 8 3 8.400 5 C8.800 7 6 7.600 5.600 9 C5.200 10.400 6.400 11.600 5.600 12.600 C3 11.400 1.400 8 3 3.400 Z M10.400 6.600 C12 6 13.400 7 13.400 8.600 C13 11 11.400 12.600 9.400 13 C9 11.400 10.600 10.600 10 9 C9.600 8 9.600 7 10.400 6.600 Z" fill="#3a2f8a"/></svg>
<span class="t" style="left:961.00px;top:78.00px;font-family:'Liberation Sans',sans-serif;font-size:12px;font-weight:normal;color:#f4f0fa;transform:scaleX(0.8708);">ALL</span>
<svg style="left:997px;top:76px" width="16" height="16" viewBox="0 0 48 48"><circle cx="24" cy="24" r="24" fill="#fff"/><g transform="translate(7.2 7.2) scale(0.7)"><path fill="#EA4335" d="M24 9.5c3.54 0 6.71 1.22 9.21 3.6l6.85-6.85C35.9 2.38 30.47 0 24 0 14.62 0 6.51 5.38 2.56 13.22l7.98 6.19C12.43 13.72 17.74 9.5 24 9.5z"/><path fill="#4285F4" d="M46.98 24.55c0-1.57-.15-3.09-.38-4.55H24v9.02h12.94c-.58 2.96-2.26 5.48-4.78 7.18l7.73 6c4.51-4.18 7.09-10.36 7.09-17.65z"/><path fill="#FBBC05" d="M10.53 28.59c-.48-1.45-.76-2.99-.76-4.59s.27-3.14.76-4.59l-7.98-6.19C.92 16.46 0 20.12 0 24c0 3.88.92 7.54 2.56 10.78l7.97-6.19z"/><path fill="#34A853" d="M24 48c6.48 0 11.93-2.13 15.89-5.81l-7.73-6c-2.15 1.45-4.92 2.3-8.16 2.3-6.26 0-11.57-4.22-13.47-9.91l-7.98 6.19C6.51 42.62 14.62 48 24 48z"/></g></svg>
<span class="t" style="left:1021.50px;top:78.00px;font-family:'Liberation Sans',sans-serif;font-size:12px;font-weight:normal;color:#f4f0fa;transform:scaleX(0.8234);">K</span>
<svg style="left:1044px;top:76px" width="16" height="16" viewBox="0 0 48 48"><circle cx="24" cy="24" r="24" fill="#fff"/><g transform="translate(7.2 7.2) scale(0.7)"><path fill="#EA4335" d="M24 9.5c3.54 0 6.71 1.22 9.21 3.6l6.85-6.85C35.9 2.38 30.47 0 24 0 14.62 0 6.51 5.38 2.56 13.22l7.98 6.19C12.43 13.72 17.74 9.5 24 9.5z"/><path fill="#4285F4" d="M46.98 24.55c0-1.57-.15-3.09-.38-4.55H24v9.02h12.94c-.58 2.96-2.26 5.48-4.78 7.18l7.73 6c4.51-4.18 7.09-10.36 7.09-17.65z"/><path fill="#FBBC05" d="M10.53 28.59c-.48-1.45-.76-2.99-.76-4.59s.27-3.14.76-4.59l-7.98-6.19C.92 16.46 0 20.12 0 24c0 3.88.92 7.54 2.56 10.78l7.97-6.19z"/><path fill="#34A853" d="M24 48c6.48 0 11.93-2.13 15.89-5.81l-7.73-6c-2.15 1.45-4.92 2.3-8.16 2.3-6.26 0-11.57-4.22-13.47-9.91l-7.98 6.19C6.51 42.62 14.62 48 24 48z"/></g></svg>
<span class="t" style="left:1068.80px;top:78.00px;font-family:'Liberation Sans',sans-serif;font-size:12px;font-weight:normal;color:#f4f0fa;transform:scaleX(0.7485);">B</span>
<svg style="left:1091px;top:76px" width="16" height="16" viewBox="0 0 48 48"><circle cx="24" cy="24" r="24" fill="#fff"/><g transform="translate(7.2 7.2) scale(0.7)"><path fill="#EA4335" d="M24 9.5c3.54 0 6.71 1.22 9.21 3.6l6.85-6.85C35.9 2.38 30.47 0 24 0 14.62 0 6.51 5.38 2.56 13.22l7.98 6.19C12.43 13.72 17.74 9.5 24 9.5z"/><path fill="#4285F4" d="M46.98 24.55c0-1.57-.15-3.09-.38-4.55H24v9.02h12.94c-.58 2.96-2.26 5.48-4.78 7.18l7.73 6c4.51-4.18 7.09-10.36 7.09-17.65z"/><path fill="#FBBC05" d="M10.53 28.59c-.48-1.45-.76-2.99-.76-4.59s.27-3.14.76-4.59l-7.98-6.19C.92 16.46 0 20.12 0 24c0 3.88.92 7.54 2.56 10.78l7.97-6.19z"/><path fill="#34A853" d="M24 48c6.48 0 11.93-2.13 15.89-5.81l-7.73-6c-2.15 1.45-4.92 2.3-8.16 2.3-6.26 0-11.57-4.22-13.47-9.91l-7.98 6.19C6.51 42.62 14.62 48 24 48z"/></g></svg>
<span class="t" style="left:1115.60px;top:78.00px;font-family:'Liberation Sans',sans-serif;font-size:12px;font-weight:normal;color:#f4f0fa;transform:scaleX(0.9600);">M</span>
<svg style="left:1142px;top:76px" width="16" height="16" viewBox="0 0 48 48"><circle cx="24" cy="24" r="24" fill="#fff"/><g transform="translate(7.2 7.2) scale(0.7)"><path fill="#EA4335" d="M24 9.5c3.54 0 6.71 1.22 9.21 3.6l6.85-6.85C35.9 2.38 30.47 0 24 0 14.62 0 6.51 5.38 2.56 13.22l7.98 6.19C12.43 13.72 17.74 9.5 24 9.5z"/><path fill="#4285F4" d="M46.98 24.55c0-1.57-.15-3.09-.38-4.55H24v9.02h12.94c-.58 2.96-2.26 5.48-4.78 7.18l7.73 6c4.51-4.18 7.09-10.36 7.09-17.65z"/><path fill="#FBBC05" d="M10.53 28.59c-.48-1.45-.76-2.99-.76-4.59s.27-3.14.76-4.59l-7.98-6.19C.92 16.46 0 20.12 0 24c0 3.88.92 7.54 2.56 10.78l7.97-6.19z"/><path fill="#34A853" d="M24 48c6.48 0 11.93-2.13 15.89-5.81l-7.73-6c-2.15 1.45-4.92 2.3-8.16 2.3-6.26 0-11.57-4.22-13.47-9.91l-7.98 6.19C6.51 42.62 14.62 48 24 48z"/></g></svg>
<span class="t" style="left:1166.50px;top:78.00px;font-family:'Liberation Sans',sans-serif;font-size:12px;font-weight:normal;color:#f4f0fa;transform:scaleX(0.8764);">N</span>
<svg style="left:1191px;top:76px" width="16" height="16" viewBox="0 0 48 48"><circle cx="24" cy="24" r="24" fill="#fff"/><g transform="translate(7.2 7.2) scale(0.7)"><path fill="#EA4335" d="M24 9.5c3.54 0 6.71 1.22 9.21 3.6l6.85-6.85C35.9 2.38 30.47 0 24 0 14.62 0 6.51 5.38 2.56 13.22l7.98 6.19C12.43 13.72 17.74 9.5 24 9.5z"/><path fill="#4285F4" d="M46.98 24.55c0-1.57-.15-3.09-.38-4.55H24v9.02h12.94c-.58 2.96-2.26 5.48-4.78 7.18l7.73 6c4.51-4.18 7.09-10.36 7.09-17.65z"/><path fill="#FBBC05" d="M10.53 28.59c-.48-1.45-.76-2.99-.76-4.59s.27-3.14.76-4.59l-7.98-6.19C.92 16.46 0 20.12 0 24c0 3.88.92 7.54 2.56 10.78l7.97-6.19z"/><path fill="#34A853" d="M24 48c6.48 0 11.93-2.13 15.89-5.81l-7.73-6c-2.15 1.45-4.92 2.3-8.16 2.3-6.26 0-11.57-4.22-13.47-9.91l-7.98 6.19C6.51 42.62 14.62 48 24 48z"/></g></svg>
<span class="t" style="left:1215.00px;top:78.00px;font-family:'Liberation Sans',sans-serif;font-size:12px;font-weight:normal;color:#f4f0fa;">A</span>
<svg style="left:1239px;top:76px" width="16" height="16" viewBox="0 0 48 48"><circle cx="24" cy="24" r="24" fill="#fff"/><g transform="translate(7.2 7.2) scale(0.7)"><path fill="#EA4335" d="M24 9.5c3.54 0 6.71 1.22 9.21 3.6l6.85-6.85C35.9 2.38 30.47 0 24 0 14.62 0 6.51 5.38 2.56 13.22l7.98 6.19C12.43 13.72 17.74 9.5 24 9.5z"/><path fill="#4285F4" d="M46.98 24.55c0-1.57-.15-3.09-.38-4.55H24v9.02h12.94c-.58 2.96-2.26 5.48-4.78 7.18l7.73 6c4.51-4.18 7.09-10.36 7.09-17.65z"/><path fill="#FBBC05" d="M10.53 28.59c-.48-1.45-.76-2.99-.76-4.59s.27-3.14.76-4.59l-7.98-6.19C.92 16.46 0 20.12 0 24c0 3.88.92 7.54 2.56 10.78l7.97-6.19z"/><path fill="#34A853" d="M24 48c6.48 0 11.93-2.13 15.89-5.81l-7.73-6c-2.15 1.45-4.92 2.3-8.16 2.3-6.26 0-11.57-4.22-13.47-9.91l-7.98 6.19C6.51 42.62 14.62 48 24 48z"/></g></svg>
<span class="t" style="left:1263.00px;top:78.00px;font-family:'Liberation Sans',sans-serif;font-size:12px;font-weight:normal;color:#f4f0fa;transform:scaleX(0.8234);">P</span>
<svg style="left:1286px;top:76px" width="16" height="16" viewBox="0 0 48 48"><circle cx="24" cy="24" r="24" fill="#fff"/><g transform="translate(7.2 7.2) scale(0.7)"><path fill="#EA4335" d="M24 9.5c3.54 0 6.71 1.22 9.21 3.6l6.85-6.85C35.9 2.38 30.47 0 24 0 14.62 0 6.51 5.38 2.56 13.22l7.98 6.19C12.43 13.72 17.74 9.5 24 9.5z"/><path fill="#4285F4" d="M46.98 24.55c0-1.57-.15-3.09-.38-4.55H24v9.02h12.94c-.58 2.96-2.26 5.48-4.78 7.18l7.73 6c4.51-4.18 7.09-10.36 7.09-17.65z"/><path fill="#FBBC05" d="M10.53 28.59c-.48-1.45-.76-2.99-.76-4.59s.27-3.14.76-4.59l-7.98-6.19C.92 16.46 0 20.12 0 24c0 3.88.92 7.54 2.56 10.78l7.97-6.19z"/><path fill="#34A853" d="M24 48c6.48 0 11.93-2.13 15.89-5.81l-7.73-6c-2.15 1.45-4.92 2.3-8.16 2.3-6.26 0-11.57-4.22-13.47-9.91l-7.98 6.19C6.51 42.62 14.62 48 24 48z"/></g></svg>
<span class="t" style="left:1310.40px;top:78.00px;font-family:'Liberation Sans',sans-serif;font-size:12px;font-weight:normal;color:#f4f0fa;transform:scaleX(0.7178);">I</span>
<svg style="left:1338.500px;top:81px" width="9" height="7" viewBox="0 0 9 7"><path d="M0.700 0.500 L3.700 3.500 L0.700 6.500 M4.900 0.500 L7.900 3.500 L4.900 6.500" stroke="#fff" stroke-width="1.300" fill="none"/></svg>
<div id="taskbar" class="abs"></div>
<div class="abs" style="left:0px;top:676px;width:40px;height:40px;background:#1e3220;"></div>
<svg style="left:7.800px;top:687.500px" width="17" height="17" viewBox="0 0 17 17"><path d="M0 2.400 L7 1.400 V8 H0 Z M8 1.250 L17 0 V8 H8 Z M0 9 H7 V15.600 L0 14.600 Z M8 9 H17 V17 L8 15.750 Z" fill="#fff"/></svg>
<div class="abs" style="left:40px;top:677px;width:287.5px;height:39px;background:#f2f2f2;"></div>
<svg style="left:51px;top:687px" width="18" height="18" viewBox="0 0 18 18"><circle cx="11.400" cy="6.500" r="5.100" stroke="#222" stroke-width="1.300" fill="none"/><path d="M7.700 10.300 L1.800 16.200" stroke="#222" stroke-width="1.500"/></svg>
<span class="t" style="left:80.00px;top:689.00px;font-family:'Liberation Sans',sans-serif;font-size:15px;font-weight:normal;color:#2e2e2e;transform:scaleX(0.9655);">Type here to search</span>
<svg style="left:343px;top:687px" width="18" height="17" viewBox="0 0 18 17"><path d="M0.600 3.600 V0.600 H10.600 V3.600 M0.600 13.400 V16.400 H10.600 V13.400" stroke="#fff" stroke-width="1.200" fill="none"/><rect x="0.600" y="5.600" width="10" height="5.800" stroke="#fff" stroke-width="1.200" fill="none"/><path d="M14.600 0.600 V16.400" stroke="#fff" stroke-width="1.200"/><rect x="13" y="5.600" width="3.400" height="2.600" fill="#fff"/></svg>
<svg style="left:391px;top:685px" width="24" height="22" viewBox="0 0 24 22"><defs><linearGradient id="cpa" x1="0" y1="0" x2="1" y2="1"><stop offset="0" stop-color="#2f7cf6"/><stop offset="0.500" stop-color="#3fb3e8"/><stop offset="1" stop-color="#7bd66a"/></linearGradient><linearGradient id="cpb" x1="0" y1="0" x2="1" y2="1"><stop offset="0" stop-color="#f0c22a"/><stop offset="0.500" stop-color="#f0624a"/><stop offset="1" stop-color="#c94ae0"/></linearGradient></defs><path d="M8 1 H15 C17.500 1 18.500 3 19 5 L20 9 H14 L12.500 4 C12 2.500 11 2 9.500 2.500 L6 15 C5.500 17 4 17.500 2.500 16.500 C1 15.500 1 13 1.500 11 L4 3.500 C4.600 1.800 6 1 8 1 Z" fill="url(#cpa)"/><path d="M16 21 H9 C6.500 21 5.500 19 5 17 L4 13 H10 L11.500 18 C12 19.500 13 20 14.500 19.500 L18 7 C18.500 5 20 4.500 21.500 5.500 C23 6.500 23 9 22.500 11 L20 18.500 C19.400 20.200 18 21 16 21 Z" fill="url(#cpb)"/></svg>
<svg style="left:440px;top:686px" width="23" height="20" viewBox="0 0 23 20"><path d="M0.500 2.500 C0.500 1.500 1 1 2 1 H8 L10 3.500 H21 C22 3.500 22.500 4 22.500 5 V18 C22.500 19 22 19.500 21 19.500 H2 C1 19.500 0.500 19 0.500 18 Z" fill="#e9a825"/><path d="M0.500 6 H22.500 V18 C22.500 19 22 19.500 21 19.500 H2 C1 19.500 0.500 19 0.500 18 Z" fill="#fbd464"/><rect x="6" y="10.500" width="11" height="9" fill="#2f8fe6"/><rect x="9" y="14.500" width="5" height="5" fill="#fbd464"/></svg>
<svg style="left:489px;top:684px" width="24" height="24" viewBox="0 0 24 24"><defs><radialGradient id="ffa" cx="0.600" cy="0.200" r="0.900"><stop offset="0" stop-color="#ffdd3a"/><stop offset="0.400" stop-color="#ff9a1a"/><stop offset="0.800" stop-color="#f0324a"/><stop offset="1" stop-color="#d4206a"/></radialGradient></defs><path d="M13 1 C14 3 16 4 18 6 C21 9 23 12 22 16 C21 20.500 17 23.500 12 23.500 C6 23.500 1.500 19 1.500 13.500 C1.500 10 3 7.500 5 6 C5 7.500 5.500 8.500 6.500 9 C7 6 9 4.500 10 3.500 C10.500 5 11 5.500 12 6 C12 4 12.500 2.500 13 1 Z" fill="url(#ffa)"/><circle cx="12" cy="14" r="5.400" fill="#7a3fe0"/><path d="M7 12 C9 10.500 12 11 13.500 12.500 C15 12.500 16.500 12 17.500 11 C18 14 16 18.500 12 19 C8.500 19 6.500 16 7 12 Z" fill="#ffb31a" opacity="0.900"/><circle cx="11.500" cy="14.500" r="3" fill="#6a35d0"/></svg>
<svg style="left:538px;top:685px" width="24" height="22" viewBox="0 0 24 22"><path d="M5 1 H18 L22.500 5.500 V21 H5 Z" fill="#eef5ea" stroke="#7aa06a" stroke-width="0.800"/><path d="M18 1 V5.500 H22.500 Z" fill="#b8cfb0"/><path d="M8 9 H21 M8 12.500 H21 M8 16 H21 M12 7 V19.500 M17 7 V19.500" stroke="#3a8a3a" stroke-width="1.800"/><path d="M0.500 4 L12.500 2.500 V16.500 L0.500 15 Z" fill="#2e8b3e"/><path d="M3.500 6.500 L9.500 13 M9.500 6.500 L3.500 13" stroke="#fff" stroke-width="2"/></svg>
<svg style="left:586px;top:684px" width="24" height="24" viewBox="0 0 24 24"><circle cx="12" cy="12" r="11.600" fill="#fff"/><path d="M12 12 L1.950 6.200 A11.600 11.600 0 0 1 22.050 6.200 Z" fill="#ea4335"/><path d="M12 12 L22.050 6.200 A11.600 11.600 0 0 1 12 23.600 Z" fill="#fbbc05"/><path d="M12 12 L12 23.600 A11.600 11.600 0 0 1 1.950 6.200 Z" fill="#34a853"/><path d="M12 6.200 H22.050 A11.600 11.600 0 0 0 1.950 6.200 Z" fill="#ea4335"/><circle cx="12" cy="12" r="5.400" fill="#fff"/><circle cx="12" cy="12" r="4.300" fill="#4285f4"/></svg>
<div class="abs" style="left:626px;top:695px;width:44px;height:21px;background:#545454;"></div>
<svg style="left:637px;top:683px" width="22" height="24" viewBox="0 0 22 24"><path d="M9.300 1.500 H12.700 L18 18 H4 Z" fill="#f08a10"/><path d="M7.800 6.200 H14.200 L15.400 10 H6.600 Z M5.600 13.200 H16.400 L17.400 16.400 H4.600 Z" fill="#f4f4f4"/><path d="M1.500 18 H20.500 L21.500 22.500 H0.500 Z" fill="#f08a10"/></svg>
<div class="abs" style="left:432px;top:714px;width:38.5px;height:2px;background:#85bdf0;"></div>
<div class="abs" style="left:530px;top:714px;width:40px;height:2px;background:#85bdf0;"></div>
<div class="abs" style="left:578px;top:714px;width:40px;height:2px;background:#85bdf0;"></div>
<div class="abs" style="left:626px;top:714px;width:44px;height:2px;background:#85bdf0;"></div>
<div class="abs" style="left:466px;top:714px;width:1px;height:2px;background:#393939;"></div>
<svg style="left:909px;top:682px" width="27" height="26" viewBox="0 0 27 26"><path d="M9 2.500 C11 6 10 10.500 5.500 12 C9.500 14 14.500 11 14 6.500 C13.600 4 11.500 2.500 9 2.500 Z" fill="#f6a623"/><path d="M6.500 24 C3 24 1 22 1 19.500 C1 17 3 15.500 5 15.500 C5.500 12.500 8 10.500 11 10.500 C13.500 10.500 15.500 12 16.500 14 C17 13.800 17.600 13.700 18.300 13.700 C21.500 13.700 24 16 24 19 C24 22 21.500 24 18.500 24 Z" fill="#a9c9f2"/><path d="M3 22.500 C8 24 18 24 22.500 22 C21.500 23.400 20 24 18.500 24 H6.500 C5 24 3.800 23.500 3 22.500 Z" fill="#7ea6dc"/><circle cx="19" cy="7.500" r="5.600" fill="#d3262c"/></svg>
<span class="t" style="left:925.49px;top:687.00px;font-family:'Liberation Sans',sans-serif;font-size:9px;font-weight:normal;color:#fff;">1</span>
<span class="t" style="left:942.30px;top:689.00px;font-family:'Liberation Sans',sans-serif;font-size:14.5px;font-weight:normal;color:#fff;transform:scaleX(0.8795);">28°C</span>
<span class="t" style="left:980.50px;top:689.00px;font-family:'Liberation Sans',sans-serif;font-size:14.5px;font-weight:normal;color:#fff;transform:scaleX(0.9767);">Mostly cloudy</span>
<svg style="left:1091px;top:692px" width="13" height="8" viewBox="0 0 13 8"><path d="M0.600 7.300 L6.500 1 L12.400 7.300" stroke="#fff" stroke-width="1.300" fill="none"/></svg>
<svg style="left:1115px;top:687px" width="13" height="19" viewBox="0 0 13 19"><rect x="0.700" y="5.200" width="8" height="8.600" rx="2" stroke="#fff" stroke-width="1.200" fill="none"/><path d="M8.700 8.500 L12.300 6.500 V12.500 L8.700 10.500" stroke="#fff" stroke-width="1.100" fill="none"/><path d="M2 2.600 C3.500 0.700 8 0.700 9.500 2.600 M2 16.400 C3.500 18.300 8 18.300 9.500 16.400" stroke="#fff" stroke-width="1.100" fill="none"/></svg>
<svg style="left:1136px;top:689px" width="18" height="13" viewBox="0 0 18 13"><rect x="5.200" y="2.200" width="11" height="7.600" fill="#fff"/><rect x="16.200" y="4.200" width="1.400" height="3.600" fill="#fff"/><path d="M1.400 0.500 V3 M4 0.500 V3" stroke="#fff" stroke-width="1.100"/><path d="M0.600 3 H4.800 V5 C4.800 6.600 3.800 7.200 2.700 7.200 C1.600 7.200 0.600 6.600 0.600 5 Z" fill="none" stroke="#fff" stroke-width="1"/><path d="M2.700 7.200 V10.500 H5.200" stroke="#fff" stroke-width="1" fill="none"/></svg>
<svg style="left:1163px;top:690px" width="15" height="14" viewBox="0 0 15 14"><path d="M1 13 A12 12 0 0 1 13 1" stroke="#fff" stroke-width="1.200" fill="none"/><path d="M4.600 13 A8.400 8.400 0 0 1 13 4.600" stroke="#fff" stroke-width="1.200" fill="none"/><path d="M8.200 13 A4.800 4.800 0 0 1 13 8.200" stroke="#fff" stroke-width="1.200" fill="none"/><circle cx="12.200" cy="12.200" r="1.500" fill="#fff"/></svg>
<svg style="left:1184px;top:688px" width="19" height="15" viewBox="0 0 19 15"><path d="M0.700 5 H3.600 L7.400 1.400 V13.600 L3.600 10 H0.700 Z" stroke="#fff" stroke-width="1.100" fill="none"/><path d="M9.600 5 C10.800 6.400 10.800 8.600 9.600 10 M12 3 C14.200 5.500 14.200 9.500 12 12 M14.400 1 C17.800 4.600 17.800 10.400 14.400 14" stroke="#fff" stroke-width="1.100" fill="none"/></svg>
<span class="t" style="left:1211.30px;top:682.00px;font-family:'Liberation Sans',sans-serif;font-size:12.5px;font-weight:normal;color:#fff;transform:scaleX(0.8341);">ENG</span>
<span class="t" style="left:1217.30px;top:699.00px;font-family:'Liberation Sans',sans-serif;font-size:12.5px;font-weight:normal;color:#fff;transform:scaleX(0.9360);">IN</span>
<span class="t" style="left:1250.00px;top:681.00px;font-family:'Liberation Sans',sans-serif;font-size:12.5px;font-weight:normal;color:#fff;transform:scaleX(0.8764);">10:09 PM</span>
<span class="t" style="left:1247.00px;top:699.00px;font-family:'Liberation Sans',sans-serif;font-size:12.5px;font-weight:normal;color:#fff;transform:scaleX(0.9297);">6/17/2025</span>
<svg style="left:1317px;top:688px" width="17" height="15" viewBox="0 0 17 15"><path d="M0.300 0.300 H16.300 V10.800 H3.800 L0.300 14.200 Z" fill="#fff"/><path d="M3 3.200 H13.600 M3 5.600 H13.600 M3 8 H13.600" stroke="#393939" stroke-width="0.900"/></svg>
<div class="abs" style="left:1323.500px;top:694.300px;width:18px;height:18px;border-radius:9px;background:#2e2e2e;border:1px solid #8a8a8a"></div>
<span class="t" style="left:1326.85px;top:699.00px;font-family:'Liberation Sans',sans-serif;font-size:11.5px;font-weight:normal;color:#fff;transform:scaleX(0.8987);">10</span>
<div class="abs" style="left:1353px;top:676px;width:1px;height:40px;background:#777"></div>
</body></html>
